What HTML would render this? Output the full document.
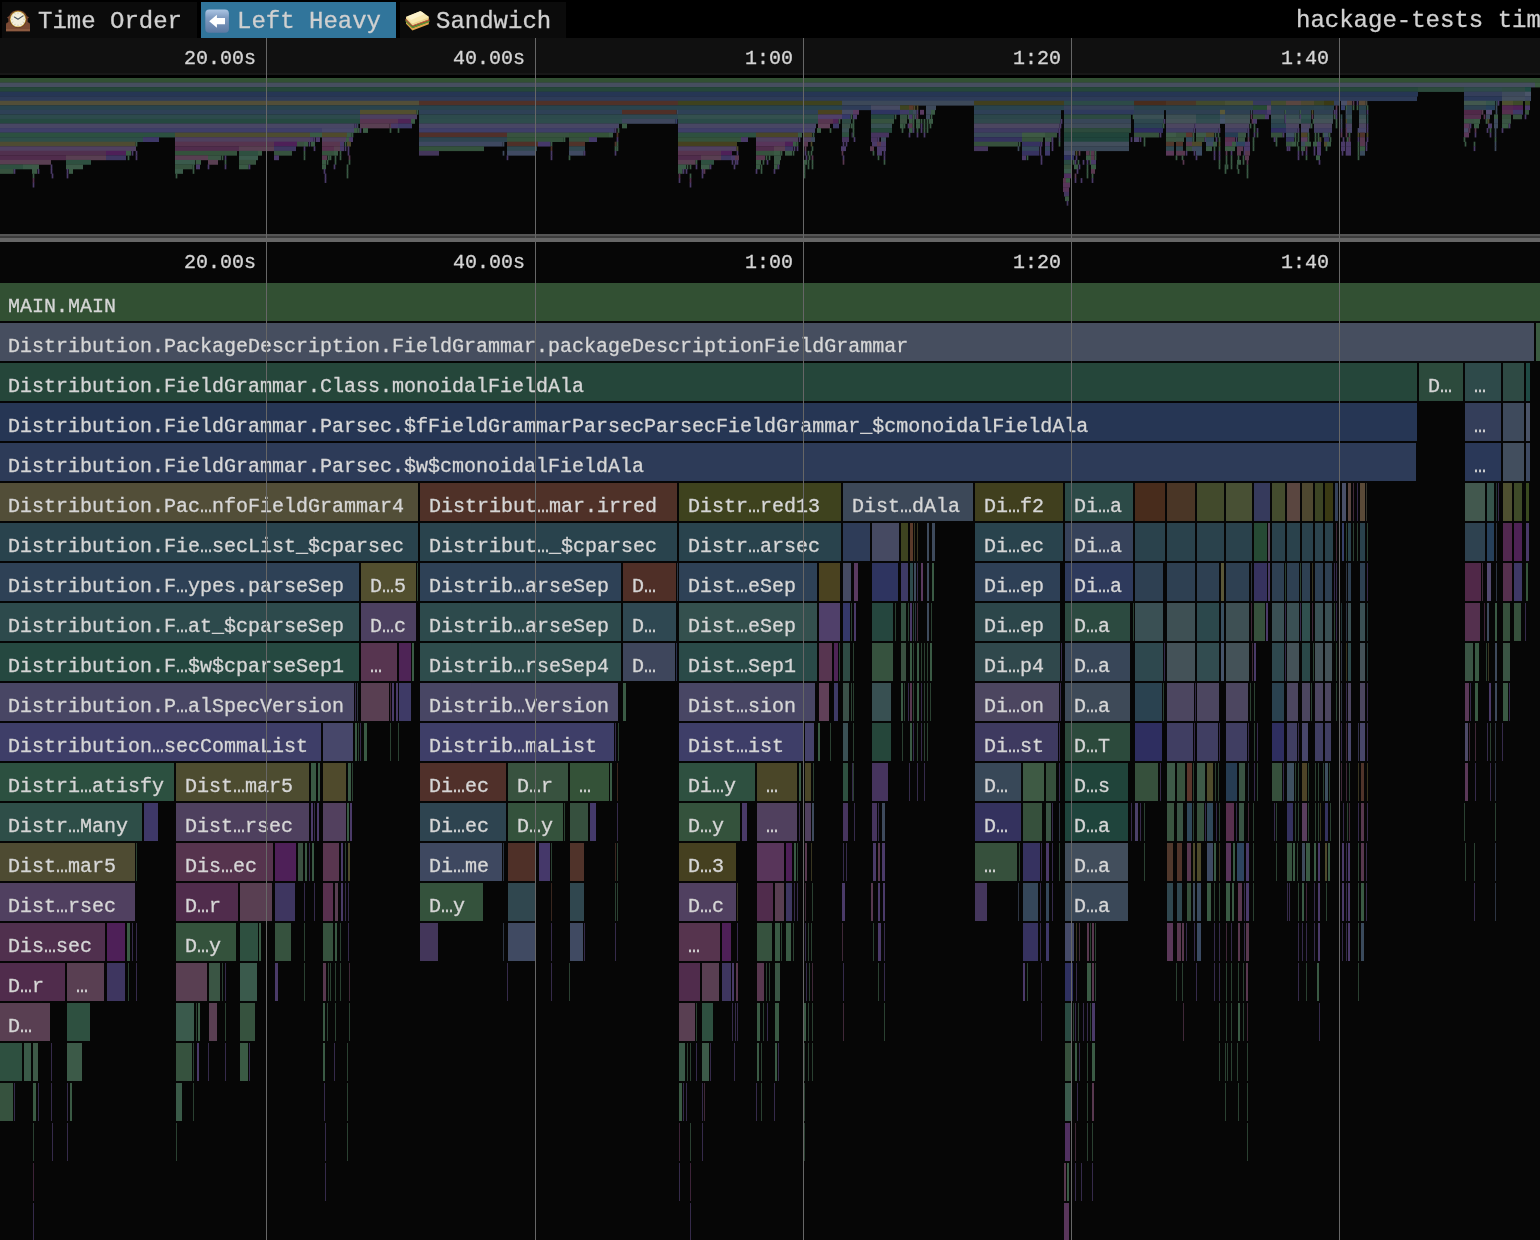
<!DOCTYPE html>
<html><head><meta charset="utf-8"><title>speedscope</title>
<style>
html,body{margin:0;padding:0;background:#060606;overflow:hidden}
body{width:1540px;height:1240px;position:relative;font-family:"Liberation Mono","DejaVu Sans Mono",monospace;color:#d4d4d4}
#tb{position:absolute;left:0;top:0;width:1540px;height:38px;background:#000}
.tab{position:absolute;top:2px;height:36px;background:#0b0b0b;font-size:24px;line-height:40px;white-space:pre;color:#d0d0d0;-webkit-text-stroke:.3px #d0d0d0}
.tab.on{background:#31759b}
.tab span.t{position:absolute;top:0}
#title{position:absolute;left:1296px;top:0;height:38px;line-height:41px;font-size:24px;white-space:pre;color:#d0d0d0;-webkit-text-stroke:.3px #d0d0d0}
#mmlab{position:absolute;left:0;top:38px;width:1540px;height:35px;background:#101010;border-bottom:2px solid #171717}
#mmgap{position:absolute;left:0;top:75px;width:1540px;height:3px;background:#000}
#sep{position:absolute;left:0;top:234px;width:1540px;height:8px;background:#666}
#sep i{position:absolute;left:0;top:2px;width:1540px;height:2px;background:#3c3c3c;display:block}
#sep b{position:absolute;left:0;top:0;width:1540px;height:2px;background:#555;display:block}
.tl{position:absolute;width:190px;text-align:right;font-size:20px;line-height:43px;height:38px;white-space:pre;color:#d4d4d4;-webkit-text-stroke:.3px #d4d4d4}
.gl{position:absolute;top:38px;width:1px;height:1202px;background:#666}
.l{position:absolute;font-size:20px;line-height:48px;height:38px;white-space:pre;overflow:hidden;color:#d6d6d6;-webkit-text-stroke:.3px #d6d6d6}
svg.big{position:absolute;left:0;top:0}
svg.ic{position:absolute}
#w{position:absolute;left:0;top:0;width:1540px;height:1240px;transform:translateZ(0);will-change:transform}
</style></head><body><div id="w">
<div id="tb">
<div class="tab" style="left:2px;width:195px"><svg class="ic" style="left:2px;top:6px" width="26" height="26" viewBox="4 8 26 26"><path d="M6 31.2V24.4Q6 22.8 7.6 22.5L8.4 22V18.4L7 17.8 8.2 16.6H9A9.6 9.6 0 0 1 27 16.6H27.8L29 17.8 27.6 18.4V22L28.4 22.5Q30 22.8 30 24.4V31.2Z" fill="#7b4a34"/><rect x="6" y="29" width="24" height="2.2" fill="#8c5a40"/><circle cx="18" cy="19.2" r="8.7" fill="#5e3623"/><circle cx="18" cy="19.2" r="8.1" fill="#c9a23a"/><circle cx="18" cy="19.2" r="7.4" fill="#f3eedc"/><g stroke="#b9b4a0" stroke-width=".7"><path d="M18 12.4v1.4M18 24.6v1.4M11.2 19.2h1.4M23.4 19.2h1.4M14.6 13.3l.7 1.2M21.4 13.3l-.7 1.2M14.6 25.1l.7-1.2M21.4 25.1l-.7-1.2M12.1 15.8l1.2.7M23.9 15.8l-1.2.7M12.1 22.6l1.2-.7M23.9 22.6l-1.2-.7"/></g><path d="M14.4 17L18 19.3 23 15.9" fill="none" stroke="#47525e" stroke-width="1.1" stroke-linecap="round" stroke-linejoin="round"/></svg><span class="t" style="left:36px">Time Order</span></div>
<div class="tab on" style="left:201px;width:195px"><svg class="ic" style="left:2px;top:6px" width="26" height="26" viewBox="203 8 26 26"><defs><linearGradient id="ag" x1="0" y1="0" x2="0" y2="1"><stop offset="0" stop-color="#adc6e4"/><stop offset=".35" stop-color="#809cc1"/><stop offset="1" stop-color="#5d7aa3"/></linearGradient></defs><rect x="205.3" y="9.5" width="23.6" height="23.2" rx="4" fill="url(#ag)"/><path d="M209.2 21.2L216.9 14.7V18H225V24.2H216.9V27.7Z" fill="#fff"/></svg><span class="t" style="left:36px">Left Heavy</span></div>
<div class="tab" style="left:400px;width:166px"><svg class="ic" style="left:3px;top:6px" width="28" height="26" viewBox="403 8 28 26"><path d="M406.0 21.4L412.4 28.0L428.8 21.8L428.8 24.2L412.4 30.4L406.0 23.8Z" fill="#e0a54c"/><path d="M405.4 19.8L412.4 26.4L429.4 20.2L429.4 22.0L412.4 28.2L405.4 21.6Z" fill="#5a9436"/><path d="M405.5 18.8L412.4 25.4L429.3 19.2L429.3 20.4L412.4 26.6L405.5 20.0Z" fill="#d8553a"/><path d="M406.0 16.2L412.4 22.8L428.8 16.6L428.8 19.4L412.4 25.6L406.0 19.0Z" fill="#efd48c"/><path d="M407.2 16.3L419.40000000000003 11.4Q420.6 10.8 421.8 11.7L428.2 16.3Q429.2 17.2 428.0 17.7L413.79999999999995 23.099999999999998Q412.4 23.7 411.2 22.799999999999997L406.4 17.8Q405.5 16.8 407.2 16.3Z" fill="#f8e8b0"/><path d="M407.6 16.400000000000002L419.40000000000003 11.6Q420.6 11.0 421.8 11.9L424.6 14.0L411.0 20.0Z" fill="#fcf2cc"/></svg><span class="t" style="left:36px">Sandwich</span></div>
<div id="title">hackage-tests time.eventlog</div>
</div>
<div id="mmlab"></div><div id="mmgap"></div>
<svg class="big" width="1540" height="1240" viewBox="0 0 1540 1240" shape-rendering="crispEdges">
<g id="mini" shape-rendering="auto"><rect x="0" y="78" width="1540" height="4.85" fill="#325033"/><rect x="0" y="82.55" width="1535" height="4.85" fill="#464e5f"/><rect x="1535" y="82.55" width="5" height="4.85" fill="#3a5a40"/><rect x="0" y="87.1" width="1418" height="4.85" fill="#25463a"/><rect x="1418" y="87.1" width="46" height="4.85" fill="#2c4a3c"/><rect x="1464" y="87.1" width="38" height="4.85" fill="#2e4a4a"/><rect x="1502" y="87.1" width="23" height="4.85" fill="#2e4a44"/><rect x="1525" y="87.1" width="6" height="4.85" fill="#1f4a44"/><rect x="0" y="91.65" width="1418" height="4.85" fill="#263654"/><rect x="1464" y="91.65" width="38" height="4.85" fill="#343e5a"/><rect x="1502" y="91.65" width="23" height="4.85" fill="#3e4a5c"/><rect x="1525" y="91.65" width="6" height="4.85" fill="#4a5468"/><rect x="0" y="96.2" width="1417" height="4.85" fill="#2d3b58"/><rect x="1464" y="96.2" width="38" height="4.85" fill="#2a3858"/><rect x="1502" y="96.2" width="23" height="4.85" fill="#424e5e"/><rect x="1525" y="96.2" width="6" height="4.85" fill="#3e4a62"/><rect x="0" y="100.75" width="419" height="4.85" fill="#524e38"/><rect x="419" y="100.75" width="259" height="4.85" fill="#4f3128"/><rect x="678" y="100.75" width="164" height="4.85" fill="#3e421e"/><rect x="842" y="100.75" width="132" height="4.85" fill="#3c4858"/><rect x="974" y="100.75" width="90" height="4.85" fill="#403f1e"/><rect x="1064" y="100.75" width="70" height="4.85" fill="#2c4a47"/><rect x="1134" y="100.75" width="32" height="4.85" fill="#482c1c"/><rect x="1166" y="100.75" width="30" height="4.85" fill="#4a3626"/><rect x="1196" y="100.75" width="29" height="4.85" fill="#424a2c"/><rect x="1225" y="100.75" width="28" height="4.85" fill="#485034"/><rect x="1253" y="100.75" width="18" height="4.85" fill="#363a5c"/><rect x="1271" y="100.75" width="15" height="4.85" fill="#444c2e"/><rect x="1286" y="100.75" width="15" height="4.85" fill="#5a4640"/><rect x="1301" y="100.75" width="13" height="4.85" fill="#4e4830"/><rect x="1314" y="100.75" width="10" height="4.85" fill="#3c4424"/><rect x="1324" y="100.75" width="10" height="4.85" fill="#3a3a14"/><rect x="1334" y="100.75" width="5" height="4.85" fill="#36425a"/><rect x="1341" y="100.75" width="6" height="4.85" fill="#4a5068"/><rect x="1347" y="100.75" width="5" height="4.85" fill="#5a4640"/><rect x="1352.65" y="100.75" width="1.7" height="4.85" fill="#58384f"/><rect x="1356.65" y="100.75" width="1.7" height="4.85" fill="#4a3a68"/><rect x="1359" y="100.75" width="6.65" height="4.85" fill="#5a4a38"/><rect x="1365.65" y="100.75" width="1.7" height="4.85" fill="#4a4a40"/><rect x="1464" y="100.75" width="22" height="4.85" fill="#42584e"/><rect x="1486" y="100.75" width="9" height="4.85" fill="#36544c"/><rect x="1495.65" y="100.75" width="2" height="4.85" fill="#2e4a4c"/><rect x="1497.65" y="100.75" width="1.7" height="4.85" fill="#4a3a68"/><rect x="1502" y="100.75" width="11" height="4.85" fill="#4e5030"/><rect x="1513" y="100.75" width="10" height="4.85" fill="#3e4a28"/><rect x="1525" y="100.75" width="5" height="4.85" fill="#3a4a20"/><rect x="0" y="105.3" width="419" height="4.85" fill="#29434d"/><rect x="419" y="105.3" width="259" height="4.85" fill="#29434d"/><rect x="678" y="105.3" width="164" height="4.85" fill="#29434d"/><rect x="842" y="105.3" width="29" height="4.85" fill="#2e3c58"/><rect x="871" y="105.3" width="29" height="4.85" fill="#464a62"/><rect x="900" y="105.3" width="9" height="4.85" fill="#3e4420"/><rect x="909" y="105.3" width="4.65" height="4.85" fill="#5a3a2a"/><rect x="913.65" y="105.3" width="1.7" height="4.85" fill="#4e4a2c"/><rect x="916.65" y="105.3" width="1.7" height="4.85" fill="#4e4a2c"/><rect x="926" y="105.3" width="5" height="4.85" fill="#3e4a5c"/><rect x="931" y="105.3" width="5" height="4.85" fill="#3e4a5c"/><rect x="974" y="105.3" width="90" height="4.85" fill="#29434d"/><rect x="1064" y="105.3" width="70" height="4.85" fill="#36425a"/><rect x="1134" y="105.3" width="32" height="4.85" fill="#2a424c"/><rect x="1166" y="105.3" width="30" height="4.85" fill="#2a424c"/><rect x="1196" y="105.3" width="29" height="4.85" fill="#2a424c"/><rect x="1225" y="105.3" width="28" height="4.85" fill="#2a424c"/><rect x="1253" y="105.3" width="14" height="4.85" fill="#264a34"/><rect x="1267" y="105.3" width="4" height="4.85" fill="#5a4a60"/><rect x="1271" y="105.3" width="15" height="4.85" fill="#2a424c"/><rect x="1286" y="105.3" width="15" height="4.85" fill="#2a424c"/><rect x="1301" y="105.3" width="13" height="4.85" fill="#2a424c"/><rect x="1314" y="105.3" width="10" height="4.85" fill="#2c444e"/><rect x="1324" y="105.3" width="10" height="4.85" fill="#2a424c"/><rect x="1335.65" y="105.3" width="1.7" height="4.85" fill="#58384f"/><rect x="1341" y="105.3" width="4" height="4.85" fill="#36406a"/><rect x="1345.65" y="105.3" width="1.35" height="4.85" fill="#3a5a44"/><rect x="1347" y="105.3" width="5" height="4.85" fill="#2a424c"/><rect x="1352.65" y="105.3" width="1.7" height="4.85" fill="#3a5a44"/><rect x="1356.65" y="105.3" width="1.7" height="4.85" fill="#3a5a44"/><rect x="1359" y="105.3" width="7" height="4.85" fill="#2a424c"/><rect x="1366.65" y="105.3" width="1.7" height="4.85" fill="#3a5a44"/><rect x="1464" y="105.3" width="22" height="4.85" fill="#2e4250"/><rect x="1486" y="105.3" width="9" height="4.85" fill="#26405a"/><rect x="1495.65" y="105.3" width="1.7" height="4.85" fill="#3e4a5c"/><rect x="1502" y="105.3" width="11" height="4.85" fill="#522850"/><rect x="1513" y="105.3" width="10" height="4.85" fill="#4e2256"/><rect x="1525" y="105.3" width="5" height="4.85" fill="#4a3a68"/><rect x="0" y="109.85" width="360" height="4.85" fill="#2e4156"/><rect x="360" y="109.85" width="56.65" height="4.85" fill="#524f2f"/><rect x="416.65" y="109.85" width="1.7" height="4.85" fill="#3a5a44"/><rect x="419" y="109.85" width="203" height="4.85" fill="#2e4156"/><rect x="622" y="109.85" width="54.65" height="4.85" fill="#4f2f27"/><rect x="676.65" y="109.85" width="1.35" height="4.85" fill="#3e4a5c"/><rect x="678" y="109.85" width="140" height="4.85" fill="#2e4156"/><rect x="818" y="109.85" width="24" height="4.85" fill="#4a4220"/><rect x="842" y="109.85" width="11" height="4.85" fill="#454a62"/><rect x="853" y="109.85" width="6" height="4.85" fill="#5a3a60"/><rect x="871" y="109.85" width="29" height="4.85" fill="#2e3460"/><rect x="900" y="109.85" width="9" height="4.85" fill="#3e3a66"/><rect x="909" y="109.85" width="4" height="4.85" fill="#2e4a4c"/><rect x="913" y="109.85" width="3.65" height="4.85" fill="#3e4a5c"/><rect x="916.65" y="109.85" width="1.7" height="4.85" fill="#4a3a68"/><rect x="920" y="109.85" width="4" height="4.85" fill="#5a3a60"/><rect x="926" y="109.85" width="5" height="4.85" fill="#3e4a5c"/><rect x="931" y="109.85" width="4" height="4.85" fill="#3a5a44"/><rect x="974" y="109.85" width="87" height="4.85" fill="#2e4056"/><rect x="1064" y="109.85" width="70" height="4.85" fill="#2e3a5c"/><rect x="1134" y="109.85" width="30" height="4.85" fill="#2e4052"/><rect x="1166" y="109.85" width="30" height="4.85" fill="#2e4052"/><rect x="1196" y="109.85" width="24" height="4.85" fill="#2e4052"/><rect x="1220" y="109.85" width="5" height="4.85" fill="#5a5838"/><rect x="1225" y="109.85" width="25" height="4.85" fill="#2e4052"/><rect x="1250.65" y="109.85" width="1.7" height="4.85" fill="#3e4a5c"/><rect x="1253" y="109.85" width="14" height="4.85" fill="#36325e"/><rect x="1267" y="109.85" width="4" height="4.85" fill="#4a3a68"/><rect x="1271" y="109.85" width="13.65" height="4.85" fill="#2e4052"/><rect x="1284.65" y="109.85" width="1.35" height="4.85" fill="#3a5a44"/><rect x="1286" y="109.85" width="13.65" height="4.85" fill="#2e4052"/><rect x="1299.65" y="109.85" width="1.35" height="4.85" fill="#3a5a44"/><rect x="1301" y="109.85" width="10" height="4.85" fill="#2e4052"/><rect x="1311.65" y="109.85" width="1.7" height="4.85" fill="#4e4a2c"/><rect x="1314" y="109.85" width="10" height="4.85" fill="#2e4052"/><rect x="1324" y="109.85" width="9" height="4.85" fill="#2e4052"/><rect x="1333.65" y="109.85" width="2" height="4.85" fill="#4a3a68"/><rect x="1335.65" y="109.85" width="1.7" height="4.85" fill="#4a3a68"/><rect x="1345.65" y="109.85" width="1.35" height="4.85" fill="#3e4a5c"/><rect x="1347" y="109.85" width="5" height="4.85" fill="#2e4052"/><rect x="1359" y="109.85" width="7" height="4.85" fill="#2e4052"/><rect x="1366.65" y="109.85" width="1.7" height="4.85" fill="#4a3a68"/><rect x="1464" y="109.85" width="17.65" height="4.85" fill="#502848"/><rect x="1481.65" y="109.85" width="1.7" height="4.85" fill="#593f52"/><rect x="1486" y="109.85" width="6" height="4.85" fill="#544a70"/><rect x="1495.65" y="109.85" width="1.7" height="4.85" fill="#3e4a5c"/><rect x="1502" y="109.85" width="11" height="4.85" fill="#56304e"/><rect x="1513" y="109.85" width="10" height="4.85" fill="#3e3866"/><rect x="1525" y="109.85" width="4" height="4.85" fill="#36543c"/><rect x="0" y="114.4" width="360" height="4.85" fill="#2d4a4c"/><rect x="360" y="114.4" width="57" height="4.85" fill="#4c4060"/><rect x="419" y="114.4" width="203" height="4.85" fill="#2d4a4c"/><rect x="622" y="114.4" width="56" height="4.85" fill="#2f4852"/><rect x="678" y="114.4" width="140" height="4.85" fill="#34504e"/><rect x="818" y="114.4" width="24" height="4.85" fill="#50406a"/><rect x="842" y="114.4" width="8.65" height="4.85" fill="#35386a"/><rect x="850.65" y="114.4" width="1.7" height="4.85" fill="#3a5a44"/><rect x="853" y="114.4" width="4" height="4.85" fill="#4a3a68"/><rect x="871" y="114.4" width="23" height="4.85" fill="#25463e"/><rect x="894.65" y="114.4" width="1.7" height="4.85" fill="#3a5a44"/><rect x="900" y="114.4" width="7" height="4.85" fill="#345040"/><rect x="907.65" y="114.4" width="1.35" height="4.85" fill="#3a5a44"/><rect x="909" y="114.4" width="3.65" height="4.85" fill="#4a3a68"/><rect x="912.65" y="114.4" width="2" height="4.85" fill="#3a5a44"/><rect x="914.65" y="114.4" width="2" height="4.85" fill="#3e4a5c"/><rect x="916.65" y="114.4" width="1.7" height="4.85" fill="#58384f"/><rect x="926" y="114.4" width="4" height="4.85" fill="#3e4a5c"/><rect x="930.65" y="114.4" width="1.7" height="4.85" fill="#3a5a44"/><rect x="974" y="114.4" width="87" height="4.85" fill="#2c464a"/><rect x="1064" y="114.4" width="67" height="4.85" fill="#2c4a40"/><rect x="1132.65" y="114.4" width="1.35" height="4.85" fill="#3a5a44"/><rect x="1134" y="114.4" width="30" height="4.85" fill="#3a5054"/><rect x="1166" y="114.4" width="30" height="4.85" fill="#3e5054"/><rect x="1196" y="114.4" width="24" height="4.85" fill="#2c484c"/><rect x="1220" y="114.4" width="5" height="4.85" fill="#3a5060"/><rect x="1225" y="114.4" width="25" height="4.85" fill="#3e5054"/><rect x="1250.65" y="114.4" width="1.7" height="4.85" fill="#58384f"/><rect x="1253" y="114.4" width="12" height="4.85" fill="#36503c"/><rect x="1265" y="114.4" width="4" height="4.85" fill="#4a3a68"/><rect x="1271" y="114.4" width="13.65" height="4.85" fill="#3a5054"/><rect x="1284.65" y="114.4" width="1.35" height="4.85" fill="#4a3a68"/><rect x="1286" y="114.4" width="13.65" height="4.85" fill="#3a5054"/><rect x="1299.65" y="114.4" width="1.35" height="4.85" fill="#4a3a68"/><rect x="1301" y="114.4" width="10" height="4.85" fill="#30504e"/><rect x="1311.65" y="114.4" width="1.7" height="4.85" fill="#58384f"/><rect x="1314" y="114.4" width="10" height="4.85" fill="#3a5054"/><rect x="1324" y="114.4" width="9" height="4.85" fill="#3a5054"/><rect x="1333.65" y="114.4" width="2" height="4.85" fill="#3a5a44"/><rect x="1335.65" y="114.4" width="1.7" height="4.85" fill="#4a3a68"/><rect x="1340.65" y="114.4" width="1.7" height="4.85" fill="#2e4a4c"/><rect x="1345.65" y="114.4" width="1.35" height="4.85" fill="#3e4a5c"/><rect x="1347" y="114.4" width="5" height="4.85" fill="#3a5054"/><rect x="1359" y="114.4" width="7" height="4.85" fill="#3a5054"/><rect x="1366.65" y="114.4" width="1.7" height="4.85" fill="#2e4a4c"/><rect x="1464" y="114.4" width="17" height="4.85" fill="#54304e"/><rect x="1483.65" y="114.4" width="1.7" height="4.85" fill="#56304e"/><rect x="1486" y="114.4" width="4" height="4.85" fill="#3e4a5c"/><rect x="1494" y="114.4" width="4" height="4.85" fill="#3a5a44"/><rect x="1502" y="114.4" width="9" height="4.85" fill="#36503c"/><rect x="1513" y="114.4" width="9" height="4.85" fill="#36503c"/><rect x="1524.65" y="114.4" width="1.7" height="4.85" fill="#4a3a68"/><rect x="0" y="118.95" width="360" height="4.85" fill="#254840"/><rect x="360" y="118.95" width="38" height="4.85" fill="#573550"/><rect x="398" y="118.95" width="13" height="4.85" fill="#4e2456"/><rect x="411" y="118.95" width="4" height="4.85" fill="#3a5a44"/><rect x="419" y="118.95" width="203" height="4.85" fill="#2e4c4c"/><rect x="622" y="118.95" width="53.65" height="4.85" fill="#3e465c"/><rect x="675.65" y="118.95" width="1.7" height="4.85" fill="#36406a"/><rect x="678" y="118.95" width="140" height="4.85" fill="#2a4a48"/><rect x="818" y="118.95" width="15" height="4.85" fill="#573550"/><rect x="833" y="118.95" width="5.65" height="4.85" fill="#4e2456"/><rect x="838.65" y="118.95" width="1.7" height="4.85" fill="#3a5a44"/><rect x="842" y="118.95" width="9" height="4.85" fill="#2e4a44"/><rect x="852.65" y="118.95" width="1.7" height="4.85" fill="#3a5a44"/><rect x="871" y="118.95" width="23" height="4.85" fill="#36523e"/><rect x="900" y="118.95" width="7" height="4.85" fill="#3a5040"/><rect x="909" y="118.95" width="3.65" height="4.85" fill="#3a5a44"/><rect x="912.65" y="118.95" width="1.7" height="4.85" fill="#3a5a44"/><rect x="916" y="118.95" width="4" height="4.85" fill="#3a5a44"/><rect x="920.65" y="118.95" width="1.7" height="4.85" fill="#3a5a44"/><rect x="923.65" y="118.95" width="1.7" height="4.85" fill="#3a5a44"/><rect x="926.65" y="118.95" width="1.7" height="4.85" fill="#3a5a44"/><rect x="929" y="118.95" width="4" height="4.85" fill="#3a5a44"/><rect x="974" y="118.95" width="86.65" height="4.85" fill="#30484c"/><rect x="1060.65" y="118.95" width="1.7" height="4.85" fill="#4a3a68"/><rect x="1064" y="118.95" width="67" height="4.85" fill="#384658"/><rect x="1134" y="118.95" width="29.65" height="4.85" fill="#2e484e"/><rect x="1163.65" y="118.95" width="1.7" height="4.85" fill="#4a3a68"/><rect x="1166" y="118.95" width="30" height="4.85" fill="#445258"/><rect x="1196" y="118.95" width="24" height="4.85" fill="#324c50"/><rect x="1220" y="118.95" width="5" height="4.85" fill="#46546a"/><rect x="1225" y="118.95" width="25" height="4.85" fill="#445258"/><rect x="1251.65" y="118.95" width="1.35" height="4.85" fill="#58384f"/><rect x="1253" y="118.95" width="4" height="4.85" fill="#4a3a68"/><rect x="1271" y="118.95" width="13.65" height="4.85" fill="#2e484e"/><rect x="1284.65" y="118.95" width="1.35" height="4.85" fill="#4a3a68"/><rect x="1286" y="118.95" width="15" height="4.85" fill="#445258"/><rect x="1301" y="118.95" width="10" height="4.85" fill="#2a4848"/><rect x="1312.65" y="118.95" width="1.35" height="4.85" fill="#3a5a44"/><rect x="1314" y="118.95" width="10" height="4.85" fill="#445258"/><rect x="1324" y="118.95" width="9" height="4.85" fill="#445258"/><rect x="1335.65" y="118.95" width="1.7" height="4.85" fill="#3a5a44"/><rect x="1340.65" y="118.95" width="1.7" height="4.85" fill="#3e4a5c"/><rect x="1345.65" y="118.95" width="1.35" height="4.85" fill="#4e4a2c"/><rect x="1347" y="118.95" width="5" height="4.85" fill="#2e4a4c"/><rect x="1359" y="118.95" width="7" height="4.85" fill="#445258"/><rect x="1366.65" y="118.95" width="1.7" height="4.85" fill="#2e4a4c"/><rect x="1464" y="118.95" width="10" height="4.85" fill="#3a5444"/><rect x="1474" y="118.95" width="6" height="4.85" fill="#3a5a44"/><rect x="1485.65" y="118.95" width="2" height="4.85" fill="#3a5a44"/><rect x="1487.65" y="118.95" width="1.7" height="4.85" fill="#4e4a2c"/><rect x="1494" y="118.95" width="4" height="4.85" fill="#3e4a5c"/><rect x="1502" y="118.95" width="9" height="4.85" fill="#3a5444"/><rect x="0" y="123.5" width="354.65" height="4.85" fill="#484664"/><rect x="354.65" y="123.5" width="2" height="4.85" fill="#4a3a68"/><rect x="356.65" y="123.5" width="1.7" height="4.85" fill="#3e4a5c"/><rect x="360" y="123.5" width="29.65" height="4.85" fill="#593f52"/><rect x="389.65" y="123.5" width="1.35" height="4.85" fill="#58384f"/><rect x="391" y="123.5" width="4" height="4.85" fill="#4a3a68"/><rect x="395" y="123.5" width="3" height="4.85" fill="#4a3a68"/><rect x="398" y="123.5" width="14" height="4.85" fill="#3e3a66"/><rect x="419" y="123.5" width="200" height="4.85" fill="#484664"/><rect x="622" y="123.5" width="5" height="4.85" fill="#3a5a44"/><rect x="678" y="123.5" width="138" height="4.85" fill="#484664"/><rect x="818" y="123.5" width="12" height="4.85" fill="#604058"/><rect x="833" y="123.5" width="6" height="4.85" fill="#3e3a66"/><rect x="842" y="123.5" width="8" height="4.85" fill="#3a5048"/><rect x="850.65" y="123.5" width="2" height="4.85" fill="#3a5a44"/><rect x="852.65" y="123.5" width="1.7" height="4.85" fill="#3a5a44"/><rect x="871" y="123.5" width="21" height="4.85" fill="#385052"/><rect x="900" y="123.5" width="3.65" height="4.85" fill="#3a5a44"/><rect x="903.65" y="123.5" width="1.7" height="4.85" fill="#3a5a44"/><rect x="907.65" y="123.5" width="1.35" height="4.85" fill="#4a3a68"/><rect x="909" y="123.5" width="3.65" height="4.85" fill="#58384f"/><rect x="912.65" y="123.5" width="1.7" height="4.85" fill="#3a5a44"/><rect x="916" y="123.5" width="4" height="4.85" fill="#3a5a44"/><rect x="920.65" y="123.5" width="1.7" height="4.85" fill="#4a3a68"/><rect x="923.65" y="123.5" width="1.7" height="4.85" fill="#3a5a44"/><rect x="926.65" y="123.5" width="1.7" height="4.85" fill="#3a5a44"/><rect x="929.65" y="123.5" width="1.7" height="4.85" fill="#3a5a44"/><rect x="974" y="123.5" width="85.65" height="4.85" fill="#4c4660"/><rect x="1059.65" y="123.5" width="1.7" height="4.85" fill="#4a3a68"/><rect x="1064" y="123.5" width="67" height="4.85" fill="#3e4a58"/><rect x="1134" y="123.5" width="28.65" height="4.85" fill="#2a4250"/><rect x="1162.65" y="123.5" width="1.7" height="4.85" fill="#3a5a44"/><rect x="1166" y="123.5" width="28.65" height="4.85" fill="#4c4660"/><rect x="1194.65" y="123.5" width="1.35" height="4.85" fill="#4a3a68"/><rect x="1196" y="123.5" width="24" height="4.85" fill="#4c4660"/><rect x="1225" y="123.5" width="24" height="4.85" fill="#4c4660"/><rect x="1249.65" y="123.5" width="1.7" height="4.85" fill="#3a5a44"/><rect x="1253.65" y="123.5" width="1.7" height="4.85" fill="#3a5a44"/><rect x="1271" y="123.5" width="15" height="4.85" fill="#2a4250"/><rect x="1286" y="123.5" width="13" height="4.85" fill="#4c4660"/><rect x="1301" y="123.5" width="9.65" height="4.85" fill="#4c4660"/><rect x="1310.65" y="123.5" width="1.7" height="4.85" fill="#3a5a44"/><rect x="1314" y="123.5" width="10" height="4.85" fill="#4c4660"/><rect x="1324" y="123.5" width="8" height="4.85" fill="#4c4660"/><rect x="1335.65" y="123.5" width="1.7" height="4.85" fill="#3a5a44"/><rect x="1340.65" y="123.5" width="1.7" height="4.85" fill="#3e4a5c"/><rect x="1345.65" y="123.5" width="1.35" height="4.85" fill="#4a3a68"/><rect x="1347" y="123.5" width="5" height="4.85" fill="#4c4660"/><rect x="1359" y="123.5" width="7" height="4.85" fill="#4c4660"/><rect x="1366.65" y="123.5" width="1.7" height="4.85" fill="#4a3a68"/><rect x="1464" y="123.5" width="5.65" height="4.85" fill="#5a3858"/><rect x="1469.65" y="123.5" width="1.7" height="4.85" fill="#4a3a68"/><rect x="1474" y="123.5" width="5" height="4.85" fill="#3a5a44"/><rect x="1488" y="123.5" width="4" height="4.85" fill="#4a3a68"/><rect x="1494" y="123.5" width="4" height="4.85" fill="#3e4a5c"/><rect x="1502" y="123.5" width="6.65" height="4.85" fill="#3a5a44"/><rect x="1508.65" y="123.5" width="1.7" height="4.85" fill="#4a3a68"/><rect x="0" y="128.05" width="322" height="4.85" fill="#3e3e68"/><rect x="322" y="128.05" width="32" height="4.85" fill="#47476a"/><rect x="354" y="128.05" width="3.65" height="4.85" fill="#3a5a44"/><rect x="357.65" y="128.05" width="2" height="4.85" fill="#3a5a44"/><rect x="359.65" y="128.05" width="1.7" height="4.85" fill="#4a3a68"/><rect x="363" y="128.05" width="5" height="4.85" fill="#3a5a44"/><rect x="389.65" y="128.05" width="1.7" height="4.85" fill="#3a5a44"/><rect x="397.65" y="128.05" width="1.7" height="4.85" fill="#3a5a44"/><rect x="419" y="128.05" width="195.65" height="4.85" fill="#3e3e68"/><rect x="614.65" y="128.05" width="1.7" height="4.85" fill="#4a3a68"/><rect x="617.65" y="128.05" width="1.7" height="4.85" fill="#3a5a44"/><rect x="678" y="128.05" width="126" height="4.85" fill="#3e3e68"/><rect x="804" y="128.05" width="11" height="4.85" fill="#45426a"/><rect x="817" y="128.05" width="4" height="4.85" fill="#3a5a44"/><rect x="829.65" y="128.05" width="1.7" height="4.85" fill="#3a5a44"/><rect x="842" y="128.05" width="7" height="4.85" fill="#3a5054"/><rect x="852.65" y="128.05" width="1.7" height="4.85" fill="#3a5a44"/><rect x="871" y="128.05" width="21" height="4.85" fill="#25463a"/><rect x="901.65" y="128.05" width="1.7" height="4.85" fill="#3a5a44"/><rect x="909" y="128.05" width="3.65" height="4.85" fill="#3a5a44"/><rect x="912.65" y="128.05" width="1.7" height="4.85" fill="#4a3a68"/><rect x="916.65" y="128.05" width="1.7" height="4.85" fill="#3a5a44"/><rect x="920.65" y="128.05" width="1.7" height="4.85" fill="#4a3a68"/><rect x="923.65" y="128.05" width="1.7" height="4.85" fill="#3a5a44"/><rect x="926.65" y="128.05" width="1.7" height="4.85" fill="#3a5a44"/><rect x="974" y="128.05" width="84.65" height="4.85" fill="#3e3a60"/><rect x="1058.65" y="128.05" width="1.7" height="4.85" fill="#4a3a68"/><rect x="1064" y="128.05" width="67" height="4.85" fill="#2c4a3c"/><rect x="1134" y="128.05" width="29" height="4.85" fill="#2e2e60"/><rect x="1166" y="128.05" width="27.65" height="4.85" fill="#403e62"/><rect x="1193.65" y="128.05" width="1.7" height="4.85" fill="#4a3a68"/><rect x="1196" y="128.05" width="22.65" height="4.85" fill="#403e62"/><rect x="1218.65" y="128.05" width="1.7" height="4.85" fill="#4a3a68"/><rect x="1225" y="128.05" width="22.65" height="4.85" fill="#403e62"/><rect x="1247.65" y="128.05" width="1.7" height="4.85" fill="#4a3a68"/><rect x="1253.65" y="128.05" width="1.7" height="4.85" fill="#3a5a44"/><rect x="1256.65" y="128.05" width="1.7" height="4.85" fill="#4a3a68"/><rect x="1271" y="128.05" width="15" height="4.85" fill="#2e2e60"/><rect x="1286" y="128.05" width="11.65" height="4.85" fill="#403e62"/><rect x="1297.65" y="128.05" width="1.7" height="4.85" fill="#4a3a68"/><rect x="1301" y="128.05" width="8" height="4.85" fill="#48466a"/><rect x="1314" y="128.05" width="10" height="4.85" fill="#403e62"/><rect x="1324" y="128.05" width="8" height="4.85" fill="#403e62"/><rect x="1340.65" y="128.05" width="1.7" height="4.85" fill="#4a3a68"/><rect x="1345.65" y="128.05" width="1.35" height="4.85" fill="#58384f"/><rect x="1347" y="128.05" width="5" height="4.85" fill="#48466a"/><rect x="1357.65" y="128.05" width="1.35" height="4.85" fill="#48466a"/><rect x="1359" y="128.05" width="7" height="4.85" fill="#48466a"/><rect x="1366.65" y="128.05" width="1.7" height="4.85" fill="#4a3a68"/><rect x="1464" y="128.05" width="4.65" height="4.85" fill="#4e4a68"/><rect x="1468.65" y="128.05" width="1.7" height="4.85" fill="#58384f"/><rect x="1474.65" y="128.05" width="1.7" height="4.85" fill="#58384f"/><rect x="1486.65" y="128.05" width="1.7" height="4.85" fill="#4a3a68"/><rect x="1489.65" y="128.05" width="1.7" height="4.85" fill="#3a5a44"/><rect x="1494.65" y="128.05" width="1.7" height="4.85" fill="#3e4a5c"/><rect x="1501.65" y="128.05" width="1.7" height="4.85" fill="#4a3a68"/><rect x="0" y="132.6" width="175" height="4.85" fill="#2c5040"/><rect x="175" y="132.6" width="135" height="4.85" fill="#4d4c30"/><rect x="310" y="132.6" width="7" height="4.85" fill="#3a5a44"/><rect x="317" y="132.6" width="5" height="4.85" fill="#3a5a44"/><rect x="322" y="132.6" width="25" height="4.85" fill="#4f4a2c"/><rect x="347" y="132.6" width="4.65" height="4.85" fill="#3a5a44"/><rect x="351.65" y="132.6" width="1.7" height="4.85" fill="#3a5a44"/><rect x="419" y="132.6" width="88" height="4.85" fill="#50302a"/><rect x="507" y="132.6" width="62" height="4.85" fill="#38523f"/><rect x="569" y="132.6" width="40" height="4.85" fill="#345238"/><rect x="609" y="132.6" width="4" height="4.85" fill="#3a5a44"/><rect x="616.65" y="132.6" width="1.7" height="4.85" fill="#50342a"/><rect x="678" y="132.6" width="78" height="4.85" fill="#2e5040"/><rect x="756" y="132.6" width="42" height="4.85" fill="#4a4628"/><rect x="798" y="132.6" width="4" height="4.85" fill="#3a5a44"/><rect x="804" y="132.6" width="8" height="4.85" fill="#4a4628"/><rect x="812.65" y="132.6" width="1.7" height="4.85" fill="#3a5a44"/><rect x="842" y="132.6" width="7" height="4.85" fill="#2e5040"/><rect x="851.65" y="132.6" width="1" height="4.85" fill="#4a3a68"/><rect x="852.65" y="132.6" width="1.7" height="4.85" fill="#3a5a44"/><rect x="871" y="132.6" width="18" height="4.85" fill="#46345e"/><rect x="908.65" y="132.6" width="1.7" height="4.85" fill="#4a3a68"/><rect x="916.65" y="132.6" width="1.7" height="4.85" fill="#4a3a68"/><rect x="923.65" y="132.6" width="1.7" height="4.85" fill="#4a3a68"/><rect x="974" y="132.6" width="48" height="4.85" fill="#384858"/><rect x="1022" y="132.6" width="23" height="4.85" fill="#3e5a44"/><rect x="1045" y="132.6" width="12" height="4.85" fill="#36503c"/><rect x="1058.65" y="132.6" width="1.7" height="4.85" fill="#4a3a68"/><rect x="1064" y="132.6" width="65" height="4.85" fill="#20443a"/><rect x="1134" y="132.6" width="25" height="4.85" fill="#36503c"/><rect x="1159.65" y="132.6" width="1.7" height="4.85" fill="#4a3a68"/><rect x="1166" y="132.6" width="10" height="4.85" fill="#3e5a48"/><rect x="1176" y="132.6" width="10" height="4.85" fill="#38523e"/><rect x="1186" y="132.6" width="6.65" height="4.85" fill="#5a362c"/><rect x="1192.65" y="132.6" width="1.7" height="4.85" fill="#3a5a44"/><rect x="1196" y="132.6" width="10" height="4.85" fill="#3e5a48"/><rect x="1206" y="132.6" width="8" height="4.85" fill="#4e4c2c"/><rect x="1214.65" y="132.6" width="1.7" height="4.85" fill="#3a5a44"/><rect x="1217.65" y="132.6" width="1.7" height="4.85" fill="#3a5a44"/><rect x="1225" y="132.6" width="13" height="4.85" fill="#263c52"/><rect x="1238" y="132.6" width="8" height="4.85" fill="#3a5444"/><rect x="1247.65" y="132.6" width="1.7" height="4.85" fill="#3e4a5c"/><rect x="1253.65" y="132.6" width="1.7" height="4.85" fill="#4a3a68"/><rect x="1256.65" y="132.6" width="1.7" height="4.85" fill="#3a5a44"/><rect x="1271" y="132.6" width="11.65" height="4.85" fill="#36503c"/><rect x="1282.65" y="132.6" width="1.7" height="4.85" fill="#4a3a68"/><rect x="1286" y="132.6" width="8.65" height="4.85" fill="#3e5060"/><rect x="1294.65" y="132.6" width="1.7" height="4.85" fill="#3a5a44"/><rect x="1297.65" y="132.6" width="1.7" height="4.85" fill="#3a5a44"/><rect x="1301" y="132.6" width="6.65" height="4.85" fill="#4e4428"/><rect x="1307.65" y="132.6" width="1.7" height="4.85" fill="#3a5a44"/><rect x="1314.65" y="132.6" width="1.7" height="4.85" fill="#3a5a44"/><rect x="1317.65" y="132.6" width="1.7" height="4.85" fill="#3a5a44"/><rect x="1322.65" y="132.6" width="1.35" height="4.85" fill="#3a5a44"/><rect x="1324" y="132.6" width="4.65" height="4.85" fill="#3e5060"/><rect x="1328.65" y="132.6" width="1.7" height="4.85" fill="#3a5a44"/><rect x="1340.65" y="132.6" width="1.7" height="4.85" fill="#58384f"/><rect x="1345.65" y="132.6" width="1.7" height="4.85" fill="#58384f"/><rect x="1348.65" y="132.6" width="1.7" height="4.85" fill="#3a5a44"/><rect x="1357.65" y="132.6" width="1.7" height="4.85" fill="#4e4a2c"/><rect x="1360" y="132.6" width="5" height="4.85" fill="#50342a"/><rect x="1366.65" y="132.6" width="1.7" height="4.85" fill="#4e4a2c"/><rect x="1464" y="132.6" width="5" height="4.85" fill="#5a3858"/><rect x="1474.65" y="132.6" width="1.7" height="4.85" fill="#4a3a68"/><rect x="1489.65" y="132.6" width="1.7" height="4.85" fill="#4a3a68"/><rect x="1494.65" y="132.6" width="1.7" height="4.85" fill="#3e4a5c"/><rect x="0" y="137.15" width="143" height="4.85" fill="#2e4e48"/><rect x="143" y="137.15" width="16" height="4.85" fill="#3e3868"/><rect x="175" y="137.15" width="135" height="4.85" fill="#4e405e"/><rect x="310" y="137.15" width="3.65" height="4.85" fill="#4a3a68"/><rect x="313.65" y="137.15" width="1.7" height="4.85" fill="#4a3a68"/><rect x="316" y="137.15" width="4" height="4.85" fill="#4a3a68"/><rect x="322" y="137.15" width="24" height="4.85" fill="#52405e"/><rect x="346" y="137.15" width="3" height="4.85" fill="#3a5a44"/><rect x="349" y="137.15" width="4" height="4.85" fill="#4a3a68"/><rect x="419" y="137.15" width="88" height="4.85" fill="#2e4450"/><rect x="507" y="137.15" width="56.65" height="4.85" fill="#34523c"/><rect x="563.65" y="137.15" width="1.7" height="4.85" fill="#3a5a44"/><rect x="569" y="137.15" width="20" height="4.85" fill="#36503e"/><rect x="589" y="137.15" width="8" height="4.85" fill="#443a6a"/><rect x="616.65" y="137.15" width="1.7" height="4.85" fill="#4a3a68"/><rect x="678" y="137.15" width="63" height="4.85" fill="#34523c"/><rect x="741" y="137.15" width="7" height="4.85" fill="#4a3a68"/><rect x="756" y="137.15" width="42" height="4.85" fill="#50405e"/><rect x="798.65" y="137.15" width="1.7" height="4.85" fill="#4a3a68"/><rect x="804" y="137.15" width="7" height="4.85" fill="#50405e"/><rect x="811" y="137.15" width="4" height="4.85" fill="#3e4a5c"/><rect x="842" y="137.15" width="7" height="4.85" fill="#46345e"/><rect x="853.65" y="137.15" width="1.7" height="4.85" fill="#4a3a68"/><rect x="871" y="137.15" width="6.65" height="4.85" fill="#46345e"/><rect x="877.65" y="137.15" width="1.7" height="4.85" fill="#4a3a68"/><rect x="881" y="137.15" width="5" height="4.85" fill="#3e4a5c"/><rect x="974" y="137.15" width="48" height="4.85" fill="#34325e"/><rect x="1022" y="137.15" width="21" height="4.85" fill="#36503c"/><rect x="1045" y="137.15" width="6.65" height="4.85" fill="#3a5444"/><rect x="1051.65" y="137.15" width="1.7" height="4.85" fill="#4a3a68"/><rect x="1058.65" y="137.15" width="1.7" height="4.85" fill="#3e4a5c"/><rect x="1064" y="137.15" width="65" height="4.85" fill="#1f443c"/><rect x="1130.65" y="137.15" width="1.7" height="4.85" fill="#4a3a68"/><rect x="1134" y="137.15" width="5" height="4.85" fill="#4a4068"/><rect x="1139.65" y="137.15" width="1.7" height="4.85" fill="#4a3a68"/><rect x="1143.65" y="137.15" width="1.7" height="4.85" fill="#3a5a44"/><rect x="1166" y="137.15" width="10" height="4.85" fill="#3a5440"/><rect x="1176" y="137.15" width="8" height="4.85" fill="#3a5444"/><rect x="1186" y="137.15" width="6.65" height="4.85" fill="#30485a"/><rect x="1192.65" y="137.15" width="1.7" height="4.85" fill="#3a5a44"/><rect x="1196" y="137.15" width="8.65" height="4.85" fill="#36503c"/><rect x="1204.65" y="137.15" width="1.35" height="4.85" fill="#4a3a68"/><rect x="1206" y="137.15" width="8" height="4.85" fill="#30485a"/><rect x="1215.65" y="137.15" width="1.7" height="4.85" fill="#4a3a68"/><rect x="1218.65" y="137.15" width="1.7" height="4.85" fill="#3a5a44"/><rect x="1225" y="137.15" width="10" height="4.85" fill="#58304e"/><rect x="1235.65" y="137.15" width="1.7" height="4.85" fill="#4a3a68"/><rect x="1238" y="137.15" width="7" height="4.85" fill="#3a5444"/><rect x="1247.65" y="137.15" width="1.7" height="4.85" fill="#58384f"/><rect x="1252.65" y="137.15" width="1.7" height="4.85" fill="#3a5a44"/><rect x="1273.65" y="137.15" width="2" height="4.85" fill="#4a3a68"/><rect x="1275.65" y="137.15" width="1.7" height="4.85" fill="#3a5a44"/><rect x="1286" y="137.15" width="8" height="4.85" fill="#34325e"/><rect x="1294.65" y="137.15" width="1.7" height="4.85" fill="#3a5a44"/><rect x="1297.65" y="137.15" width="1.7" height="4.85" fill="#3a5a44"/><rect x="1301" y="137.15" width="6.65" height="4.85" fill="#5a3e5e"/><rect x="1307.65" y="137.15" width="1.7" height="4.85" fill="#3a5a44"/><rect x="1314.65" y="137.15" width="1.7" height="4.85" fill="#3a5a44"/><rect x="1317.65" y="137.15" width="2" height="4.85" fill="#3a5a44"/><rect x="1319.65" y="137.15" width="1.7" height="4.85" fill="#4e4a2c"/><rect x="1324" y="137.15" width="5" height="4.85" fill="#34325e"/><rect x="1329.65" y="137.15" width="1.7" height="4.85" fill="#3a5a44"/><rect x="1342.65" y="137.15" width="1.7" height="4.85" fill="#4a3a68"/><rect x="1346.65" y="137.15" width="2" height="4.85" fill="#3a5a44"/><rect x="1348.65" y="137.15" width="1.7" height="4.85" fill="#58384f"/><rect x="1357.65" y="137.15" width="1.7" height="4.85" fill="#4a3a68"/><rect x="1360" y="137.15" width="5" height="4.85" fill="#58384f"/><rect x="1366.65" y="137.15" width="1.7" height="4.85" fill="#4a3a68"/><rect x="1463.65" y="137.15" width="1.7" height="4.85" fill="#3a5a44"/><rect x="1494.65" y="137.15" width="1.7" height="4.85" fill="#3a5a44"/><rect x="0" y="141.7" width="135.65" height="4.85" fill="#4e4b32"/><rect x="135.65" y="141.7" width="1.7" height="4.85" fill="#3a5a44"/><rect x="175" y="141.7" width="99" height="4.85" fill="#56344e"/><rect x="274" y="141.7" width="23" height="4.85" fill="#4e2058"/><rect x="297" y="141.7" width="7" height="4.85" fill="#3a5040"/><rect x="304" y="141.7" width="4" height="4.85" fill="#3a5a44"/><rect x="308.65" y="141.7" width="1.7" height="4.85" fill="#4a3a68"/><rect x="311" y="141.7" width="4" height="4.85" fill="#3a5a44"/><rect x="322" y="141.7" width="18" height="4.85" fill="#59364f"/><rect x="340" y="141.7" width="4" height="4.85" fill="#4a3a68"/><rect x="344.65" y="141.7" width="1.7" height="4.85" fill="#3a5a44"/><rect x="347" y="141.7" width="4" height="4.85" fill="#4e4a2c"/><rect x="419" y="141.7" width="83.65" height="4.85" fill="#3e4860"/><rect x="502.65" y="141.7" width="1.7" height="4.85" fill="#3e4a5c"/><rect x="507" y="141.7" width="31" height="4.85" fill="#4f3028"/><rect x="538" y="141.7" width="12.65" height="4.85" fill="#45386a"/><rect x="550.65" y="141.7" width="1.7" height="4.85" fill="#3a5a44"/><rect x="569" y="141.7" width="16" height="4.85" fill="#50332a"/><rect x="614.65" y="141.7" width="2" height="4.85" fill="#50342a"/><rect x="616.65" y="141.7" width="1.7" height="4.85" fill="#3a5a44"/><rect x="678" y="141.7" width="59" height="4.85" fill="#454020"/><rect x="756" y="141.7" width="29" height="4.85" fill="#58355a"/><rect x="785" y="141.7" width="8" height="4.85" fill="#4e2058"/><rect x="793" y="141.7" width="3.65" height="4.85" fill="#3a5a44"/><rect x="796.65" y="141.7" width="1.7" height="4.85" fill="#3a5a44"/><rect x="804" y="141.7" width="4" height="4.85" fill="#58384f"/><rect x="810.65" y="141.7" width="1.7" height="4.85" fill="#4e4a2c"/><rect x="842.65" y="141.7" width="1.7" height="4.85" fill="#4a3a68"/><rect x="845.65" y="141.7" width="1.7" height="4.85" fill="#4a3a68"/><rect x="872" y="141.7" width="5" height="4.85" fill="#4a3a68"/><rect x="877" y="141.7" width="4" height="4.85" fill="#58384f"/><rect x="881" y="141.7" width="5" height="4.85" fill="#4a3a68"/><rect x="974" y="141.7" width="44" height="4.85" fill="#36503c"/><rect x="1018.65" y="141.7" width="1.7" height="4.85" fill="#3a5a44"/><rect x="1022" y="141.7" width="18.65" height="4.85" fill="#363260"/><rect x="1040.65" y="141.7" width="1.7" height="4.85" fill="#4a3a68"/><rect x="1045" y="141.7" width="5" height="4.85" fill="#4a3a68"/><rect x="1051.65" y="141.7" width="1.7" height="4.85" fill="#4a3a68"/><rect x="1058.65" y="141.7" width="1.7" height="4.85" fill="#3a5a44"/><rect x="1064" y="141.7" width="65" height="4.85" fill="#424e5c"/><rect x="1143.65" y="141.7" width="1.7" height="4.85" fill="#3a5a44"/><rect x="1166" y="141.7" width="8" height="4.85" fill="#50382c"/><rect x="1176" y="141.7" width="7" height="4.85" fill="#50342a"/><rect x="1186" y="141.7" width="6" height="4.85" fill="#58384f"/><rect x="1192" y="141.7" width="4" height="4.85" fill="#4e4a2c"/><rect x="1196" y="141.7" width="6" height="4.85" fill="#4e4a2c"/><rect x="1206" y="141.7" width="7" height="4.85" fill="#3e4a62"/><rect x="1213" y="141.7" width="4" height="4.85" fill="#3a5a44"/><rect x="1218.65" y="141.7" width="1.7" height="4.85" fill="#4e4a2c"/><rect x="1225" y="141.7" width="7" height="4.85" fill="#58355a"/><rect x="1232" y="141.7" width="4" height="4.85" fill="#3a5a44"/><rect x="1236" y="141.7" width="9" height="4.85" fill="#2e4460"/><rect x="1245" y="141.7" width="5" height="4.85" fill="#4a3a68"/><rect x="1252.65" y="141.7" width="1.7" height="4.85" fill="#3a5a44"/><rect x="1275.65" y="141.7" width="1.7" height="4.85" fill="#3a5a44"/><rect x="1286" y="141.7" width="6" height="4.85" fill="#36523e"/><rect x="1292" y="141.7" width="4" height="4.85" fill="#3a5a44"/><rect x="1296.65" y="141.7" width="1.7" height="4.85" fill="#3a5a44"/><rect x="1301" y="141.7" width="4" height="4.85" fill="#3e4a5c"/><rect x="1305" y="141.7" width="6" height="4.85" fill="#3a5a44"/><rect x="1313" y="141.7" width="4" height="4.85" fill="#3a5a44"/><rect x="1317" y="141.7" width="4" height="4.85" fill="#4a3a68"/><rect x="1324" y="141.7" width="3" height="4.85" fill="#4e4a2c"/><rect x="1327" y="141.7" width="4" height="4.85" fill="#3a5a44"/><rect x="1341" y="141.7" width="4" height="4.85" fill="#4a3a68"/><rect x="1345.65" y="141.7" width="1.35" height="4.85" fill="#4a3a68"/><rect x="1347" y="141.7" width="4" height="4.85" fill="#4a3a68"/><rect x="1357.65" y="141.7" width="1.7" height="4.85" fill="#3a5a44"/><rect x="1360" y="141.7" width="5" height="4.85" fill="#58384f"/><rect x="1365.65" y="141.7" width="1.7" height="4.85" fill="#4a3a68"/><rect x="1464.65" y="141.7" width="1.7" height="4.85" fill="#3a5a44"/><rect x="1473.65" y="141.7" width="1.7" height="4.85" fill="#3a5a44"/><rect x="1494.65" y="141.7" width="1.7" height="4.85" fill="#3e4a5c"/><rect x="0" y="146.25" width="136" height="4.85" fill="#504060"/><rect x="175" y="146.25" width="64" height="4.85" fill="#502c4c"/><rect x="239" y="146.25" width="35" height="4.85" fill="#593f52"/><rect x="274" y="146.25" width="22" height="4.85" fill="#3e3660"/><rect x="303.65" y="146.25" width="1.7" height="4.85" fill="#4a3a68"/><rect x="313.65" y="146.25" width="1.7" height="4.85" fill="#4a3a68"/><rect x="322" y="146.25" width="12" height="4.85" fill="#58304e"/><rect x="334" y="146.25" width="6" height="4.85" fill="#593f52"/><rect x="340" y="146.25" width="4" height="4.85" fill="#4a3a68"/><rect x="344.65" y="146.25" width="1.7" height="4.85" fill="#4a3a68"/><rect x="347.65" y="146.25" width="1.7" height="4.85" fill="#4a3a68"/><rect x="419" y="146.25" width="65" height="4.85" fill="#34523c"/><rect x="507" y="146.25" width="30" height="4.85" fill="#30474f"/><rect x="550.65" y="146.25" width="1.7" height="4.85" fill="#50342a"/><rect x="569" y="146.25" width="16" height="4.85" fill="#30474f"/><rect x="614.65" y="146.25" width="2" height="4.85" fill="#3a5a44"/><rect x="616.65" y="146.25" width="1.7" height="4.85" fill="#3a5a44"/><rect x="678" y="146.25" width="58.65" height="4.85" fill="#504060"/><rect x="736.65" y="146.25" width="1.7" height="4.85" fill="#4e4a2c"/><rect x="756" y="146.25" width="18" height="4.85" fill="#502c4c"/><rect x="774" y="146.25" width="11" height="4.85" fill="#593f52"/><rect x="785" y="146.25" width="8" height="4.85" fill="#3e3660"/><rect x="793.65" y="146.25" width="1.7" height="4.85" fill="#4a3a68"/><rect x="796.65" y="146.25" width="1.7" height="4.85" fill="#4a3a68"/><rect x="804.65" y="146.25" width="1.7" height="4.85" fill="#58384f"/><rect x="811.65" y="146.25" width="1.7" height="4.85" fill="#3a5a44"/><rect x="841" y="146.25" width="5" height="4.85" fill="#4a3a68"/><rect x="870" y="146.25" width="4" height="4.85" fill="#58384f"/><rect x="877" y="146.25" width="5" height="4.85" fill="#4a3a68"/><rect x="882" y="146.25" width="4" height="4.85" fill="#4a3a68"/><rect x="974" y="146.25" width="14" height="4.85" fill="#44365c"/><rect x="1017.65" y="146.25" width="1.7" height="4.85" fill="#3e4a5c"/><rect x="1022" y="146.25" width="17" height="4.85" fill="#35475a"/><rect x="1039.65" y="146.25" width="1.7" height="4.85" fill="#4a3a68"/><rect x="1045" y="146.25" width="5" height="4.85" fill="#35475a"/><rect x="1051.65" y="146.25" width="1.7" height="4.85" fill="#4a3a68"/><rect x="1064" y="146.25" width="65" height="4.85" fill="#3a4858"/><rect x="1166" y="146.25" width="8" height="4.85" fill="#30474f"/><rect x="1176" y="146.25" width="7" height="4.85" fill="#30474f"/><rect x="1186" y="146.25" width="6" height="4.85" fill="#36503c"/><rect x="1192" y="146.25" width="4" height="4.85" fill="#3e4a5c"/><rect x="1196" y="146.25" width="6" height="4.85" fill="#3a4a5e"/><rect x="1206" y="146.25" width="6" height="4.85" fill="#3a5a44"/><rect x="1213.65" y="146.25" width="1.7" height="4.85" fill="#3a5a44"/><rect x="1218.65" y="146.25" width="1.7" height="4.85" fill="#3a5a44"/><rect x="1225" y="146.25" width="6" height="4.85" fill="#3a5a44"/><rect x="1231" y="146.25" width="4" height="4.85" fill="#3a5a44"/><rect x="1237" y="146.25" width="6" height="4.85" fill="#58384f"/><rect x="1243.65" y="146.25" width="1.35" height="4.85" fill="#4a3a68"/><rect x="1245" y="146.25" width="5" height="4.85" fill="#4a3a68"/><rect x="1252.65" y="146.25" width="1.7" height="4.85" fill="#3a5a44"/><rect x="1286.65" y="146.25" width="2" height="4.85" fill="#4a3a68"/><rect x="1288.65" y="146.25" width="1.7" height="4.85" fill="#4a3a68"/><rect x="1297.65" y="146.25" width="1.7" height="4.85" fill="#3a5a44"/><rect x="1301" y="146.25" width="4" height="4.85" fill="#3a5a44"/><rect x="1305.65" y="146.25" width="1.7" height="4.85" fill="#56304e"/><rect x="1313.65" y="146.25" width="1.7" height="4.85" fill="#4a3a68"/><rect x="1317" y="146.25" width="4" height="4.85" fill="#4a3a68"/><rect x="1325.65" y="146.25" width="1.7" height="4.85" fill="#3a5a44"/><rect x="1341" y="146.25" width="4" height="4.85" fill="#4a3a68"/><rect x="1345.65" y="146.25" width="1.35" height="4.85" fill="#4a3a68"/><rect x="1347" y="146.25" width="4" height="4.85" fill="#4a3a68"/><rect x="1357.65" y="146.25" width="1.7" height="4.85" fill="#3a5a44"/><rect x="1360" y="146.25" width="5" height="4.85" fill="#3a5a44"/><rect x="1365.65" y="146.25" width="1.7" height="4.85" fill="#4a3a68"/><rect x="1473.65" y="146.25" width="1.7" height="4.85" fill="#4a3a68"/><rect x="1494.65" y="146.25" width="1.7" height="4.85" fill="#3e4a5c"/><rect x="0" y="150.8" width="106" height="4.85" fill="#50304e"/><rect x="106" y="150.8" width="20" height="4.85" fill="#4e2058"/><rect x="126" y="150.8" width="5" height="4.85" fill="#3a5a44"/><rect x="131.65" y="150.8" width="1.7" height="4.85" fill="#4a3a68"/><rect x="135.65" y="150.8" width="1.7" height="4.85" fill="#4a3a68"/><rect x="175" y="150.8" width="62" height="4.85" fill="#34523c"/><rect x="239" y="150.8" width="19" height="4.85" fill="#2e5040"/><rect x="258" y="150.8" width="4" height="4.85" fill="#3a5a44"/><rect x="274" y="150.8" width="18" height="4.85" fill="#36523e"/><rect x="303.65" y="150.8" width="1.7" height="4.85" fill="#3a5a44"/><rect x="322" y="150.8" width="12" height="4.85" fill="#36523e"/><rect x="334" y="150.8" width="4" height="4.85" fill="#3a5a44"/><rect x="339.65" y="150.8" width="1.7" height="4.85" fill="#3a5a44"/><rect x="347.65" y="150.8" width="1.7" height="4.85" fill="#4a3a68"/><rect x="419" y="150.8" width="20" height="4.85" fill="#43365a"/><rect x="502.65" y="150.8" width="1.7" height="4.85" fill="#3e4a5c"/><rect x="507" y="150.8" width="29" height="4.85" fill="#404a62"/><rect x="550.65" y="150.8" width="1.7" height="4.85" fill="#4a3a68"/><rect x="569" y="150.8" width="14.65" height="4.85" fill="#404a62"/><rect x="583.65" y="150.8" width="1.7" height="4.85" fill="#4a3a68"/><rect x="614.65" y="150.8" width="1.7" height="4.85" fill="#4a3a68"/><rect x="678" y="150.8" width="43" height="4.85" fill="#56344e"/><rect x="721" y="150.8" width="11" height="4.85" fill="#4e2058"/><rect x="736.65" y="150.8" width="1.7" height="4.85" fill="#4a3a68"/><rect x="756" y="150.8" width="18" height="4.85" fill="#36523e"/><rect x="774" y="150.8" width="6.65" height="4.85" fill="#3a5a44"/><rect x="780.65" y="150.8" width="1.7" height="4.85" fill="#3a5a44"/><rect x="785" y="150.8" width="7" height="4.85" fill="#3a5a44"/><rect x="792.65" y="150.8" width="1.7" height="4.85" fill="#3a5a44"/><rect x="804.65" y="150.8" width="1.7" height="4.85" fill="#4a3a68"/><rect x="807.65" y="150.8" width="1.7" height="4.85" fill="#3a5a44"/><rect x="810.65" y="150.8" width="1.7" height="4.85" fill="#3a5a44"/><rect x="841.65" y="150.8" width="1.7" height="4.85" fill="#58384f"/><rect x="872.65" y="150.8" width="1.7" height="4.85" fill="#3a5a44"/><rect x="877" y="150.8" width="5" height="4.85" fill="#4a3a68"/><rect x="883.65" y="150.8" width="1.7" height="4.85" fill="#4a3a68"/><rect x="1022" y="150.8" width="17" height="4.85" fill="#363260"/><rect x="1039.65" y="150.8" width="1.7" height="4.85" fill="#4a3a68"/><rect x="1045" y="150.8" width="5" height="4.85" fill="#3e3868"/><rect x="1064" y="150.8" width="11" height="4.85" fill="#454a68"/><rect x="1075.65" y="150.8" width="1.7" height="4.85" fill="#4e4a2c"/><rect x="1078.65" y="150.8" width="1.7" height="4.85" fill="#58384f"/><rect x="1086" y="150.8" width="3.65" height="4.85" fill="#58384f"/><rect x="1089.65" y="150.8" width="1.35" height="4.85" fill="#3a5a44"/><rect x="1091" y="150.8" width="3.65" height="4.85" fill="#58384f"/><rect x="1094.65" y="150.8" width="1.7" height="4.85" fill="#3a5a44"/><rect x="1166" y="150.8" width="8" height="4.85" fill="#5a3858"/><rect x="1176" y="150.8" width="5" height="4.85" fill="#58384f"/><rect x="1181" y="150.8" width="4" height="4.85" fill="#58384f"/><rect x="1185.65" y="150.8" width="1.7" height="4.85" fill="#4a3a68"/><rect x="1193.65" y="150.8" width="1.7" height="4.85" fill="#4a3a68"/><rect x="1196" y="150.8" width="6" height="4.85" fill="#3a4a62"/><rect x="1213.65" y="150.8" width="1.7" height="4.85" fill="#4a3a68"/><rect x="1218.65" y="150.8" width="1.7" height="4.85" fill="#4a3a68"/><rect x="1225.65" y="150.8" width="1.7" height="4.85" fill="#58384f"/><rect x="1230.65" y="150.8" width="1.7" height="4.85" fill="#4a3a68"/><rect x="1237" y="150.8" width="4" height="4.85" fill="#58384f"/><rect x="1243.65" y="150.8" width="1.35" height="4.85" fill="#4a3a68"/><rect x="1245" y="150.8" width="5" height="4.85" fill="#58384f"/><rect x="1297.65" y="150.8" width="1.7" height="4.85" fill="#4a3a68"/><rect x="1301.65" y="150.8" width="1.7" height="4.85" fill="#4a3a68"/><rect x="1305.65" y="150.8" width="1.7" height="4.85" fill="#4a3a68"/><rect x="1313.65" y="150.8" width="1.7" height="4.85" fill="#4a3a68"/><rect x="1317" y="150.8" width="4" height="4.85" fill="#4a3a68"/><rect x="1341.65" y="150.8" width="1.7" height="4.85" fill="#4a3a68"/><rect x="1345.65" y="150.8" width="1.35" height="4.85" fill="#4a3a68"/><rect x="1347" y="150.8" width="4" height="4.85" fill="#4a3a68"/><rect x="1357.65" y="150.8" width="1.7" height="4.85" fill="#3a5a44"/><rect x="1360" y="150.8" width="5" height="4.85" fill="#3a4a5c"/><rect x="0" y="155.35" width="66" height="4.85" fill="#502c4c"/><rect x="66" y="155.35" width="40" height="4.85" fill="#593f52"/><rect x="106" y="155.35" width="20" height="4.85" fill="#3e3660"/><rect x="127.65" y="155.35" width="1.7" height="4.85" fill="#3a5a44"/><rect x="135.65" y="155.35" width="1.7" height="4.85" fill="#4a3a68"/><rect x="175" y="155.35" width="33" height="4.85" fill="#593f52"/><rect x="208" y="155.35" width="13" height="4.85" fill="#3a5544"/><rect x="221.65" y="155.35" width="1.7" height="4.85" fill="#3a5a44"/><rect x="224.65" y="155.35" width="1.7" height="4.85" fill="#4a3a68"/><rect x="239" y="155.35" width="19" height="4.85" fill="#3a5a4c"/><rect x="274" y="155.35" width="5" height="4.85" fill="#4a3a68"/><rect x="303.65" y="155.35" width="1.7" height="4.85" fill="#3a5a44"/><rect x="322" y="155.35" width="5" height="4.85" fill="#58384f"/><rect x="327.65" y="155.35" width="2" height="4.85" fill="#3a5a44"/><rect x="329.65" y="155.35" width="1.7" height="4.85" fill="#3a5a44"/><rect x="334.65" y="155.35" width="1.7" height="4.85" fill="#3a5a44"/><rect x="339.65" y="155.35" width="1.7" height="4.85" fill="#3a5a44"/><rect x="348.65" y="155.35" width="1.7" height="4.85" fill="#58384f"/><rect x="506.65" y="155.35" width="1.7" height="4.85" fill="#4a3a68"/><rect x="550.65" y="155.35" width="1.7" height="4.85" fill="#4a3a68"/><rect x="568.65" y="155.35" width="1.7" height="4.85" fill="#3a5a44"/><rect x="678" y="155.35" width="23" height="4.85" fill="#502c4c"/><rect x="701" y="155.35" width="20" height="4.85" fill="#593f52"/><rect x="721" y="155.35" width="10" height="4.85" fill="#3e3660"/><rect x="731" y="155.35" width="4" height="4.85" fill="#4a3a68"/><rect x="735" y="155.35" width="4" height="4.85" fill="#58384f"/><rect x="756" y="155.35" width="9" height="4.85" fill="#58384f"/><rect x="765.65" y="155.35" width="1.7" height="4.85" fill="#3a5a44"/><rect x="768.65" y="155.35" width="1.7" height="4.85" fill="#3a5a44"/><rect x="774" y="155.35" width="7" height="4.85" fill="#3a5544"/><rect x="805.65" y="155.35" width="1.7" height="4.85" fill="#4a3a68"/><rect x="808.65" y="155.35" width="1.7" height="4.85" fill="#3a5a44"/><rect x="811.65" y="155.35" width="1.7" height="4.85" fill="#58384f"/><rect x="842.65" y="155.35" width="1.7" height="4.85" fill="#4a3a68"/><rect x="877.65" y="155.35" width="1.7" height="4.85" fill="#3a5a44"/><rect x="883.65" y="155.35" width="1.7" height="4.85" fill="#4a3a68"/><rect x="1022" y="155.35" width="4" height="4.85" fill="#4a3a68"/><rect x="1026.65" y="155.35" width="1.7" height="4.85" fill="#3a5a44"/><rect x="1040.65" y="155.35" width="1.7" height="4.85" fill="#4a3a68"/><rect x="1064" y="155.35" width="10" height="4.85" fill="#2e3060"/><rect x="1075.65" y="155.35" width="1.7" height="4.85" fill="#4a3a68"/><rect x="1086" y="155.35" width="5" height="4.85" fill="#3a5a44"/><rect x="1091" y="155.35" width="3.65" height="4.85" fill="#58384f"/><rect x="1094.65" y="155.35" width="1.7" height="4.85" fill="#3a5a44"/><rect x="1175.65" y="155.35" width="1.7" height="4.85" fill="#3a5a44"/><rect x="1181.65" y="155.35" width="1.7" height="4.85" fill="#3a5a44"/><rect x="1195.65" y="155.35" width="1.7" height="4.85" fill="#4a3a68"/><rect x="1213.65" y="155.35" width="1.7" height="4.85" fill="#4a3a68"/><rect x="1218.65" y="155.35" width="1.7" height="4.85" fill="#4a3a68"/><rect x="1225.65" y="155.35" width="1.7" height="4.85" fill="#3a5a44"/><rect x="1230.65" y="155.35" width="1.7" height="4.85" fill="#3a5a44"/><rect x="1237.65" y="155.35" width="1.7" height="4.85" fill="#3a5a44"/><rect x="1242.65" y="155.35" width="1.7" height="4.85" fill="#3a5a44"/><rect x="1245" y="155.35" width="4" height="4.85" fill="#58384f"/><rect x="1297.65" y="155.35" width="1.7" height="4.85" fill="#4a3a68"/><rect x="1305.65" y="155.35" width="1.7" height="4.85" fill="#3a5a44"/><rect x="1316" y="155.35" width="4" height="4.85" fill="#3a5a44"/><rect x="1357.65" y="155.35" width="1.7" height="4.85" fill="#3a5a44"/><rect x="0" y="159.9" width="51" height="4.85" fill="#593f52"/><rect x="66" y="159.9" width="25" height="4.85" fill="#2e5040"/><rect x="175" y="159.9" width="20" height="4.85" fill="#3a5a4c"/><rect x="195.65" y="159.9" width="1.35" height="4.85" fill="#3a5a44"/><rect x="197" y="159.9" width="4" height="4.85" fill="#3a5a44"/><rect x="208" y="159.9" width="10" height="4.85" fill="#593f52"/><rect x="224.65" y="159.9" width="1.7" height="4.85" fill="#3a5a44"/><rect x="239" y="159.9" width="17" height="4.85" fill="#36523e"/><rect x="322" y="159.9" width="4" height="4.85" fill="#3a5a44"/><rect x="326.65" y="159.9" width="1.7" height="4.85" fill="#3a5a44"/><rect x="334.65" y="159.9" width="1.7" height="4.85" fill="#3a5a44"/><rect x="348.65" y="159.9" width="1.7" height="4.85" fill="#3a5a44"/><rect x="678" y="159.9" width="17.65" height="4.85" fill="#593f52"/><rect x="695.65" y="159.9" width="1.7" height="4.85" fill="#3a5a44"/><rect x="701" y="159.9" width="13" height="4.85" fill="#2e5040"/><rect x="731.65" y="159.9" width="1.7" height="4.85" fill="#4a3a68"/><rect x="734.65" y="159.9" width="2" height="4.85" fill="#4a3a68"/><rect x="736.65" y="159.9" width="1.7" height="4.85" fill="#4a3a68"/><rect x="756" y="159.9" width="5" height="4.85" fill="#3a5a44"/><rect x="762.65" y="159.9" width="1.7" height="4.85" fill="#3a5a44"/><rect x="766.65" y="159.9" width="1.7" height="4.85" fill="#4a3a68"/><rect x="774" y="159.9" width="6" height="4.85" fill="#3a5a44"/><rect x="803" y="159.9" width="4" height="4.85" fill="#3a5a44"/><rect x="807.65" y="159.9" width="1.7" height="4.85" fill="#3a5a44"/><rect x="811.65" y="159.9" width="1.7" height="4.85" fill="#3a5a44"/><rect x="842.65" y="159.9" width="1.7" height="4.85" fill="#58384f"/><rect x="883.65" y="159.9" width="1.7" height="4.85" fill="#3a5a44"/><rect x="1040.65" y="159.9" width="1.7" height="4.85" fill="#4a3a68"/><rect x="1064" y="159.9" width="8" height="4.85" fill="#2a4a42"/><rect x="1072.65" y="159.9" width="2" height="4.85" fill="#3a5a44"/><rect x="1074.65" y="159.9" width="1.7" height="4.85" fill="#4a3a68"/><rect x="1077.65" y="159.9" width="1.7" height="4.85" fill="#3a5a44"/><rect x="1082.65" y="159.9" width="1.7" height="4.85" fill="#4a3a68"/><rect x="1086.65" y="159.9" width="1.7" height="4.85" fill="#4a3a68"/><rect x="1089.65" y="159.9" width="1.35" height="4.85" fill="#3a5a44"/><rect x="1091" y="159.9" width="5" height="4.85" fill="#4a3a68"/><rect x="1182.65" y="159.9" width="1.7" height="4.85" fill="#58384f"/><rect x="1218.65" y="159.9" width="1.7" height="4.85" fill="#3a5a44"/><rect x="1225.65" y="159.9" width="1.7" height="4.85" fill="#3a5a44"/><rect x="1230.65" y="159.9" width="1.7" height="4.85" fill="#3a5a44"/><rect x="1237" y="159.9" width="4" height="4.85" fill="#3a5a44"/><rect x="1242.65" y="159.9" width="1.7" height="4.85" fill="#3a5a44"/><rect x="1246.65" y="159.9" width="1.7" height="4.85" fill="#58384f"/><rect x="1318.65" y="159.9" width="1.7" height="4.85" fill="#4a3a68"/><rect x="0" y="164.45" width="23" height="4.85" fill="#2e5040"/><rect x="23" y="164.45" width="9" height="4.85" fill="#3a5a48"/><rect x="32" y="164.45" width="7" height="4.85" fill="#3e5a48"/><rect x="50.65" y="164.45" width="1.7" height="4.85" fill="#4a3a68"/><rect x="66" y="164.45" width="17" height="4.85" fill="#3c5a48"/><rect x="175" y="164.45" width="17.65" height="4.85" fill="#36523e"/><rect x="192.65" y="164.45" width="1.7" height="4.85" fill="#3a5a44"/><rect x="196" y="164.45" width="4" height="4.85" fill="#4a3a68"/><rect x="207.65" y="164.45" width="1.7" height="4.85" fill="#4a3a68"/><rect x="224.65" y="164.45" width="1.7" height="4.85" fill="#4a3a68"/><rect x="239" y="164.45" width="9.65" height="4.85" fill="#3a5a44"/><rect x="248.65" y="164.45" width="1.7" height="4.85" fill="#4a3a68"/><rect x="322" y="164.45" width="4" height="4.85" fill="#3a5a44"/><rect x="333.65" y="164.45" width="1.7" height="4.85" fill="#4a3a68"/><rect x="346.65" y="164.45" width="1.7" height="4.85" fill="#3a5a44"/><rect x="678" y="164.45" width="8" height="4.85" fill="#3a5a48"/><rect x="686.65" y="164.45" width="1.7" height="4.85" fill="#3a5a44"/><rect x="689.65" y="164.45" width="1.7" height="4.85" fill="#3a5a44"/><rect x="695.65" y="164.45" width="1.7" height="4.85" fill="#4a3a68"/><rect x="701" y="164.45" width="8.65" height="4.85" fill="#3c5a48"/><rect x="709.65" y="164.45" width="1.7" height="4.85" fill="#4a3a68"/><rect x="733.65" y="164.45" width="1.7" height="4.85" fill="#4a3a68"/><rect x="756" y="164.45" width="4" height="4.85" fill="#3a5a44"/><rect x="760.65" y="164.45" width="1.7" height="4.85" fill="#3a5a44"/><rect x="774" y="164.45" width="3.65" height="4.85" fill="#3a5a44"/><rect x="777.65" y="164.45" width="1.7" height="4.85" fill="#4a3a68"/><rect x="803.65" y="164.45" width="1.7" height="4.85" fill="#3a5a44"/><rect x="807.65" y="164.45" width="1.7" height="4.85" fill="#3a5a44"/><rect x="811.65" y="164.45" width="1.7" height="4.85" fill="#3a5a44"/><rect x="1064" y="164.45" width="8" height="4.85" fill="#36503c"/><rect x="1074" y="164.45" width="4" height="4.85" fill="#3a5a44"/><rect x="1078.65" y="164.45" width="1.7" height="4.85" fill="#4a3a68"/><rect x="1086.65" y="164.45" width="1.7" height="4.85" fill="#3a5a44"/><rect x="1091" y="164.45" width="5" height="4.85" fill="#3a5a44"/><rect x="1218.65" y="164.45" width="1.7" height="4.85" fill="#3a5a44"/><rect x="1224.65" y="164.45" width="2" height="4.85" fill="#3a5a44"/><rect x="1226.65" y="164.45" width="1.7" height="4.85" fill="#3a5a44"/><rect x="1230.65" y="164.45" width="1.7" height="4.85" fill="#3a5a44"/><rect x="1236.65" y="164.45" width="1.7" height="4.85" fill="#3a5a44"/><rect x="1246.65" y="164.45" width="1.7" height="4.85" fill="#3a5a44"/><rect x="0" y="169" width="13.65" height="4.85" fill="#36523e"/><rect x="13.65" y="169" width="1.7" height="4.85" fill="#4a3a68"/><rect x="32" y="169" width="5" height="4.85" fill="#3a5a44"/><rect x="37.65" y="169" width="1.7" height="4.85" fill="#4a3a68"/><rect x="50.65" y="169" width="1.7" height="4.85" fill="#4a3a68"/><rect x="66.65" y="169" width="1.7" height="4.85" fill="#4a3a68"/><rect x="69" y="169" width="4" height="4.85" fill="#3a5a44"/><rect x="175" y="169" width="8" height="4.85" fill="#3a5a48"/><rect x="192.65" y="169" width="1.7" height="4.85" fill="#3a5a44"/><rect x="323.65" y="169" width="1.7" height="4.85" fill="#4a3a68"/><rect x="346.65" y="169" width="1.7" height="4.85" fill="#3a5a44"/><rect x="678" y="169" width="4.65" height="4.85" fill="#3a5a44"/><rect x="682.65" y="169" width="1.7" height="4.85" fill="#4a3a68"/><rect x="685.65" y="169" width="1.7" height="4.85" fill="#4a3a68"/><rect x="701.65" y="169" width="2" height="4.85" fill="#4a3a68"/><rect x="703.65" y="169" width="1.7" height="4.85" fill="#58384f"/><rect x="755.65" y="169" width="1.7" height="4.85" fill="#4a3a68"/><rect x="760.65" y="169" width="1.7" height="4.85" fill="#3a5a44"/><rect x="773.65" y="169" width="1.7" height="4.85" fill="#4a3a68"/><rect x="803.65" y="169" width="1.7" height="4.85" fill="#3a5a44"/><rect x="1064" y="169" width="8" height="4.85" fill="#3a5a4c"/><rect x="1076.65" y="169" width="1.7" height="4.85" fill="#4a3a68"/><rect x="1086.65" y="169" width="1.7" height="4.85" fill="#3a5a44"/><rect x="1091" y="169" width="4" height="4.85" fill="#58384f"/><rect x="1224.65" y="169" width="1.7" height="4.85" fill="#3a5a44"/><rect x="1237.65" y="169" width="1.7" height="4.85" fill="#3a5a44"/><rect x="1246.65" y="169" width="1.7" height="4.85" fill="#3a5a44"/><rect x="32.65" y="173.55" width="1.7" height="4.85" fill="#3a5a44"/><rect x="51.65" y="173.55" width="1.7" height="4.85" fill="#4a3a68"/><rect x="66.65" y="173.55" width="1.7" height="4.85" fill="#4a3a68"/><rect x="175.65" y="173.55" width="1.7" height="4.85" fill="#3a5a44"/><rect x="324.65" y="173.55" width="1.7" height="4.85" fill="#4a3a68"/><rect x="346.65" y="173.55" width="1.7" height="4.85" fill="#3a5a44"/><rect x="678.65" y="173.55" width="1.7" height="4.85" fill="#56304e"/><rect x="689.65" y="173.55" width="1.7" height="4.85" fill="#3a5a44"/><rect x="701.65" y="173.55" width="1.7" height="4.85" fill="#4a3a68"/><rect x="803.65" y="173.55" width="1.7" height="4.85" fill="#3a5a44"/><rect x="1064" y="173.55" width="7" height="4.85" fill="#503060"/><rect x="1074.65" y="173.55" width="1.7" height="4.85" fill="#58384f"/><rect x="1086.65" y="173.55" width="1.7" height="4.85" fill="#3a5a44"/><rect x="1091.65" y="173.55" width="1.7" height="4.85" fill="#3a5a44"/><rect x="1246.65" y="173.55" width="1.7" height="4.85" fill="#3a5a44"/><rect x="32.65" y="178.1" width="1.7" height="4.85" fill="#56304e"/><rect x="324.65" y="178.1" width="1.7" height="4.85" fill="#4a3a68"/><rect x="678.65" y="178.1" width="1.7" height="4.85" fill="#4a3a68"/><rect x="689.65" y="178.1" width="1.7" height="4.85" fill="#56304e"/><rect x="1063" y="178.1" width="3" height="4.85" fill="#58384f"/><rect x="1066" y="178.1" width="4" height="4.85" fill="#3a5a44"/><rect x="1074.65" y="178.1" width="1.7" height="4.85" fill="#4a3a68"/><rect x="1080.65" y="178.1" width="1.7" height="4.85" fill="#4a3a68"/><rect x="1091.65" y="178.1" width="1.7" height="4.85" fill="#4a3a68"/><rect x="32.65" y="182.65" width="1.7" height="4.85" fill="#4a3a68"/><rect x="689.65" y="182.65" width="1.7" height="4.85" fill="#4a3a68"/><rect x="1063" y="182.65" width="7" height="4.85" fill="#58355a"/><rect x="1063" y="187.2" width="6" height="4.85" fill="#563458"/><rect x="1064" y="191.75" width="5" height="4.85" fill="#43355d"/><rect x="1065" y="196.3" width="4" height="4.85" fill="#395541"/><rect x="1066.65" y="200.85" width="1.7" height="4.85" fill="#43355d"/></g>
<g id="main"><rect x="0" y="283" width="1540" height="38" fill="#325033"/><rect x="0" y="323" width="1534" height="38" fill="#464e5f"/><rect x="1536" y="323" width="4" height="38" fill="#3a5a40"/><rect x="0" y="363" width="1417" height="38" fill="#25463a"/><rect x="1419" y="363" width="44" height="38" fill="#2c4a3c"/><rect x="1465" y="363" width="36" height="38" fill="#2e4a4a"/><rect x="1503" y="363" width="21" height="38" fill="#2e4a44"/><rect x="1526" y="363" width="4" height="38" fill="#1f4a44"/><rect x="0" y="403" width="1417" height="38" fill="#263654"/><rect x="1465" y="403" width="36" height="38" fill="#343e5a"/><rect x="1503" y="403" width="21" height="38" fill="#3e4a5c"/><rect x="1526" y="403" width="4" height="38" fill="#4a5468"/><rect x="0" y="443" width="1416" height="38" fill="#2d3b58"/><rect x="1465" y="443" width="36" height="38" fill="#2a3858"/><rect x="1503" y="443" width="21" height="38" fill="#424e5e"/><rect x="1526" y="443" width="4" height="38" fill="#3e4a62"/><rect x="0" y="483" width="418" height="38" fill="#524e38"/><rect x="420" y="483" width="257" height="38" fill="#4f3128"/><rect x="679" y="483" width="162" height="38" fill="#3e421e"/><rect x="843" y="483" width="130" height="38" fill="#3c4858"/><rect x="975" y="483" width="88" height="38" fill="#403f1e"/><rect x="1065" y="483" width="68" height="38" fill="#2c4a47"/><rect x="1135" y="483" width="30" height="38" fill="#482c1c"/><rect x="1167" y="483" width="28" height="38" fill="#4a3626"/><rect x="1197" y="483" width="27" height="38" fill="#424a2c"/><rect x="1226" y="483" width="26" height="38" fill="#485034"/><rect x="1254" y="483" width="16" height="38" fill="#363a5c"/><rect x="1272" y="483" width="13" height="38" fill="#444c2e"/><rect x="1287" y="483" width="13" height="38" fill="#5a4640"/><rect x="1302" y="483" width="11" height="38" fill="#4e4830"/><rect x="1315" y="483" width="8" height="38" fill="#3c4424"/><rect x="1325" y="483" width="8" height="38" fill="#3a3a14"/><rect x="1335" y="483" width="3" height="38" fill="#36425a"/><rect x="1342" y="483" width="4" height="38" fill="#4a5068"/><rect x="1348" y="483" width="3" height="38" fill="#5a4640"/><rect x="1353" y="483" width="1" height="38" fill="#58384f" opacity=".7"/><rect x="1357" y="483" width="1" height="38" fill="#4a3a68" opacity=".7"/><rect x="1360" y="483" width="5" height="38" fill="#5a4a38"/><rect x="1366" y="483" width="1" height="38" fill="#4a4a40" opacity=".7"/><rect x="1465" y="483" width="20" height="38" fill="#42584e"/><rect x="1487" y="483" width="7" height="38" fill="#36544c"/><rect x="1496" y="483" width="1" height="38" fill="#2e4a4c" opacity=".7"/><rect x="1498" y="483" width="1" height="38" fill="#4a3a68" opacity=".7"/><rect x="1503" y="483" width="9" height="38" fill="#4e5030"/><rect x="1514" y="483" width="8" height="38" fill="#3e4a28"/><rect x="1526" y="483" width="3" height="38" fill="#3a4a20"/><rect x="0" y="523" width="418" height="38" fill="#29434d"/><rect x="420" y="523" width="257" height="38" fill="#29434d"/><rect x="679" y="523" width="162" height="38" fill="#29434d"/><rect x="843" y="523" width="27" height="38" fill="#2e3c58"/><rect x="872" y="523" width="27" height="38" fill="#464a62"/><rect x="901" y="523" width="7" height="38" fill="#3e4420"/><rect x="910" y="523" width="3" height="38" fill="#5a3a2a"/><rect x="914" y="523" width="1" height="38" fill="#4e4a2c" opacity=".7"/><rect x="917" y="523" width="1" height="38" fill="#4e4a2c" opacity=".7"/><rect x="927" y="523" width="2" height="38" fill="#3e4a5c"/><rect x="932" y="523" width="3" height="38" fill="#3e4a5c"/><rect x="975" y="523" width="88" height="38" fill="#29434d"/><rect x="1065" y="523" width="68" height="38" fill="#36425a"/><rect x="1135" y="523" width="30" height="38" fill="#2a424c"/><rect x="1167" y="523" width="28" height="38" fill="#2a424c"/><rect x="1197" y="523" width="27" height="38" fill="#2a424c"/><rect x="1226" y="523" width="26" height="38" fill="#2a424c"/><rect x="1254" y="523" width="13" height="38" fill="#264a34"/><rect x="1268" y="523" width="2" height="38" fill="#5a4a60"/><rect x="1272" y="523" width="13" height="38" fill="#2a424c"/><rect x="1287" y="523" width="13" height="38" fill="#2a424c"/><rect x="1302" y="523" width="11" height="38" fill="#2a424c"/><rect x="1315" y="523" width="8" height="38" fill="#2c444e"/><rect x="1325" y="523" width="8" height="38" fill="#2a424c"/><rect x="1336" y="523" width="1" height="38" fill="#58384f" opacity=".7"/><rect x="1342" y="523" width="2" height="38" fill="#36406a"/><rect x="1346" y="523" width="1" height="38" fill="#3a5a44" opacity=".7"/><rect x="1348" y="523" width="3" height="38" fill="#2a424c"/><rect x="1353" y="523" width="1" height="38" fill="#3a5a44" opacity=".7"/><rect x="1357" y="523" width="1" height="38" fill="#3a5a44" opacity=".7"/><rect x="1360" y="523" width="5" height="38" fill="#2a424c"/><rect x="1367" y="523" width="1" height="38" fill="#3a5a44" opacity=".7"/><rect x="1465" y="523" width="20" height="38" fill="#2e4250"/><rect x="1487" y="523" width="7" height="38" fill="#26405a"/><rect x="1496" y="523" width="1" height="38" fill="#3e4a5c" opacity=".7"/><rect x="1503" y="523" width="9" height="38" fill="#522850"/><rect x="1514" y="523" width="8" height="38" fill="#4e2256"/><rect x="1526" y="523" width="3" height="38" fill="#4a3a68"/><rect x="0" y="563" width="359" height="38" fill="#2e4156"/><rect x="361" y="563" width="55" height="38" fill="#524f2f"/><rect x="417" y="563" width="1" height="38" fill="#3a5a44" opacity=".7"/><rect x="420" y="563" width="201" height="38" fill="#2e4156"/><rect x="623" y="563" width="53" height="38" fill="#4f2f27"/><rect x="677" y="563" width="1" height="38" fill="#3e4a5c" opacity=".7"/><rect x="679" y="563" width="138" height="38" fill="#2e4156"/><rect x="819" y="563" width="21" height="38" fill="#4a4220"/><rect x="843" y="563" width="8" height="38" fill="#454a62"/><rect x="854" y="563" width="4" height="38" fill="#5a3a60"/><rect x="872" y="563" width="26" height="38" fill="#2e3460"/><rect x="901" y="563" width="7" height="38" fill="#3e3a66"/><rect x="910" y="563" width="3" height="38" fill="#2e4a4c"/><rect x="914" y="563" width="2" height="38" fill="#3e4a5c"/><rect x="917" y="563" width="1" height="38" fill="#4a3a68" opacity=".7"/><rect x="921" y="563" width="2" height="38" fill="#5a3a60"/><rect x="927" y="563" width="2" height="38" fill="#3e4a5c"/><rect x="932" y="563" width="2" height="38" fill="#3a5a44"/><rect x="975" y="563" width="85" height="38" fill="#2e4056"/><rect x="1065" y="563" width="68" height="38" fill="#2e3a5c"/><rect x="1135" y="563" width="28" height="38" fill="#2e4052"/><rect x="1167" y="563" width="28" height="38" fill="#2e4052"/><rect x="1197" y="563" width="22" height="38" fill="#2e4052"/><rect x="1221" y="563" width="3" height="38" fill="#5a5838"/><rect x="1226" y="563" width="23" height="38" fill="#2e4052"/><rect x="1251" y="563" width="1" height="38" fill="#3e4a5c" opacity=".7"/><rect x="1254" y="563" width="13" height="38" fill="#36325e"/><rect x="1268" y="563" width="2" height="38" fill="#4a3a68"/><rect x="1272" y="563" width="12" height="38" fill="#2e4052"/><rect x="1285" y="563" width="1" height="38" fill="#3a5a44" opacity=".7"/><rect x="1287" y="563" width="12" height="38" fill="#2e4052"/><rect x="1300" y="563" width="1" height="38" fill="#3a5a44" opacity=".7"/><rect x="1302" y="563" width="8" height="38" fill="#2e4052"/><rect x="1312" y="563" width="1" height="38" fill="#4e4a2c" opacity=".7"/><rect x="1315" y="563" width="8" height="38" fill="#2e4052"/><rect x="1325" y="563" width="7" height="38" fill="#2e4052"/><rect x="1334" y="563" width="1" height="38" fill="#4a3a68" opacity=".7"/><rect x="1336" y="563" width="1" height="38" fill="#4a3a68" opacity=".7"/><rect x="1346" y="563" width="1" height="38" fill="#3e4a5c" opacity=".7"/><rect x="1348" y="563" width="3" height="38" fill="#2e4052"/><rect x="1360" y="563" width="5" height="38" fill="#2e4052"/><rect x="1367" y="563" width="1" height="38" fill="#4a3a68" opacity=".7"/><rect x="1465" y="563" width="16" height="38" fill="#502848"/><rect x="1482" y="563" width="1" height="38" fill="#593f52" opacity=".7"/><rect x="1487" y="563" width="4" height="38" fill="#544a70"/><rect x="1496" y="563" width="1" height="38" fill="#3e4a5c" opacity=".7"/><rect x="1503" y="563" width="9" height="38" fill="#56304e"/><rect x="1514" y="563" width="8" height="38" fill="#3e3866"/><rect x="1526" y="563" width="2" height="38" fill="#36543c"/><rect x="0" y="603" width="359" height="38" fill="#2d4a4c"/><rect x="361" y="603" width="55" height="38" fill="#4c4060"/><rect x="420" y="603" width="201" height="38" fill="#2d4a4c"/><rect x="623" y="603" width="53" height="38" fill="#2f4852"/><rect x="679" y="603" width="138" height="38" fill="#34504e"/><rect x="819" y="603" width="21" height="38" fill="#50406a"/><rect x="843" y="603" width="7" height="38" fill="#35386a"/><rect x="851" y="603" width="1" height="38" fill="#3a5a44" opacity=".7"/><rect x="854" y="603" width="2" height="38" fill="#4a3a68"/><rect x="872" y="603" width="21" height="38" fill="#25463e"/><rect x="895" y="603" width="1" height="38" fill="#3a5a44" opacity=".7"/><rect x="901" y="603" width="5" height="38" fill="#345040"/><rect x="908" y="603" width="1" height="38" fill="#3a5a44" opacity=".7"/><rect x="910" y="603" width="2" height="38" fill="#4a3a68"/><rect x="913" y="603" width="1" height="38" fill="#3a5a44" opacity=".7"/><rect x="915" y="603" width="1" height="38" fill="#3e4a5c" opacity=".7"/><rect x="917" y="603" width="1" height="38" fill="#58384f" opacity=".7"/><rect x="927" y="603" width="2" height="38" fill="#3e4a5c"/><rect x="931" y="603" width="1" height="38" fill="#3a5a44" opacity=".7"/><rect x="975" y="603" width="85" height="38" fill="#2c464a"/><rect x="1065" y="603" width="65" height="38" fill="#2c4a40"/><rect x="1133" y="603" width="1" height="38" fill="#3a5a44" opacity=".7"/><rect x="1135" y="603" width="28" height="38" fill="#3a5054"/><rect x="1167" y="603" width="28" height="38" fill="#3e5054"/><rect x="1197" y="603" width="22" height="38" fill="#2c484c"/><rect x="1221" y="603" width="3" height="38" fill="#3a5060"/><rect x="1226" y="603" width="23" height="38" fill="#3e5054"/><rect x="1251" y="603" width="1" height="38" fill="#58384f" opacity=".7"/><rect x="1254" y="603" width="11" height="38" fill="#36503c"/><rect x="1266" y="603" width="2" height="38" fill="#4a3a68"/><rect x="1272" y="603" width="12" height="38" fill="#3a5054"/><rect x="1285" y="603" width="1" height="38" fill="#4a3a68" opacity=".7"/><rect x="1287" y="603" width="12" height="38" fill="#3a5054"/><rect x="1300" y="603" width="1" height="38" fill="#4a3a68" opacity=".7"/><rect x="1302" y="603" width="8" height="38" fill="#30504e"/><rect x="1312" y="603" width="1" height="38" fill="#58384f" opacity=".7"/><rect x="1315" y="603" width="8" height="38" fill="#3a5054"/><rect x="1325" y="603" width="7" height="38" fill="#3a5054"/><rect x="1334" y="603" width="1" height="38" fill="#3a5a44" opacity=".7"/><rect x="1336" y="603" width="1" height="38" fill="#4a3a68" opacity=".7"/><rect x="1341" y="603" width="1" height="38" fill="#2e4a4c" opacity=".7"/><rect x="1346" y="603" width="1" height="38" fill="#3e4a5c" opacity=".7"/><rect x="1348" y="603" width="3" height="38" fill="#3a5054"/><rect x="1360" y="603" width="5" height="38" fill="#3a5054"/><rect x="1367" y="603" width="1" height="38" fill="#2e4a4c" opacity=".7"/><rect x="1465" y="603" width="15" height="38" fill="#54304e"/><rect x="1484" y="603" width="1" height="38" fill="#56304e" opacity=".7"/><rect x="1487" y="603" width="2" height="38" fill="#3e4a5c"/><rect x="1495" y="603" width="2" height="38" fill="#3a5a44"/><rect x="1503" y="603" width="7" height="38" fill="#36503c"/><rect x="1514" y="603" width="7" height="38" fill="#36503c"/><rect x="1525" y="603" width="1" height="38" fill="#4a3a68" opacity=".7"/><rect x="0" y="643" width="359" height="38" fill="#254840"/><rect x="361" y="643" width="36" height="38" fill="#573550"/><rect x="399" y="643" width="12" height="38" fill="#4e2456"/><rect x="412" y="643" width="2" height="38" fill="#3a5a44"/><rect x="420" y="643" width="201" height="38" fill="#2e4c4c"/><rect x="623" y="643" width="52" height="38" fill="#3e465c"/><rect x="676" y="643" width="1" height="38" fill="#36406a" opacity=".7"/><rect x="679" y="643" width="138" height="38" fill="#2a4a48"/><rect x="819" y="643" width="13" height="38" fill="#573550"/><rect x="834" y="643" width="4" height="38" fill="#4e2456"/><rect x="839" y="643" width="1" height="38" fill="#3a5a44" opacity=".7"/><rect x="843" y="643" width="7" height="38" fill="#2e4a44"/><rect x="853" y="643" width="1" height="38" fill="#3a5a44" opacity=".7"/><rect x="872" y="643" width="21" height="38" fill="#36523e"/><rect x="901" y="643" width="5" height="38" fill="#3a5040"/><rect x="910" y="643" width="2" height="38" fill="#3a5a44"/><rect x="913" y="643" width="1" height="38" fill="#3a5a44" opacity=".7"/><rect x="917" y="643" width="2" height="38" fill="#3a5a44"/><rect x="921" y="643" width="1" height="38" fill="#3a5a44" opacity=".7"/><rect x="924" y="643" width="1" height="38" fill="#3a5a44" opacity=".7"/><rect x="927" y="643" width="1" height="38" fill="#3a5a44" opacity=".7"/><rect x="930" y="643" width="2" height="38" fill="#3a5a44"/><rect x="975" y="643" width="85" height="38" fill="#30484c"/><rect x="1061" y="643" width="1" height="38" fill="#4a3a68" opacity=".7"/><rect x="1065" y="643" width="65" height="38" fill="#384658"/><rect x="1135" y="643" width="28" height="38" fill="#2e484e"/><rect x="1164" y="643" width="1" height="38" fill="#4a3a68" opacity=".7"/><rect x="1167" y="643" width="28" height="38" fill="#445258"/><rect x="1197" y="643" width="22" height="38" fill="#324c50"/><rect x="1221" y="643" width="3" height="38" fill="#46546a"/><rect x="1226" y="643" width="23" height="38" fill="#445258"/><rect x="1252" y="643" width="1" height="38" fill="#58384f" opacity=".7"/><rect x="1254" y="643" width="2" height="38" fill="#4a3a68"/><rect x="1272" y="643" width="12" height="38" fill="#2e484e"/><rect x="1285" y="643" width="1" height="38" fill="#4a3a68" opacity=".7"/><rect x="1287" y="643" width="12" height="38" fill="#445258"/><rect x="1302" y="643" width="8" height="38" fill="#2a4848"/><rect x="1313" y="643" width="1" height="38" fill="#3a5a44" opacity=".7"/><rect x="1315" y="643" width="8" height="38" fill="#445258"/><rect x="1325" y="643" width="7" height="38" fill="#445258"/><rect x="1336" y="643" width="1" height="38" fill="#3a5a44" opacity=".7"/><rect x="1341" y="643" width="1" height="38" fill="#3e4a5c" opacity=".7"/><rect x="1346" y="643" width="1" height="38" fill="#4e4a2c" opacity=".7"/><rect x="1348" y="643" width="3" height="38" fill="#2e4a4c"/><rect x="1360" y="643" width="5" height="38" fill="#445258"/><rect x="1367" y="643" width="1" height="38" fill="#2e4a4c" opacity=".7"/><rect x="1465" y="643" width="8" height="38" fill="#3a5444"/><rect x="1475" y="643" width="4" height="38" fill="#3a5a44"/><rect x="1486" y="643" width="1" height="38" fill="#3a5a44" opacity=".7"/><rect x="1488" y="643" width="1" height="38" fill="#4e4a2c" opacity=".7"/><rect x="1495" y="643" width="2" height="38" fill="#3e4a5c"/><rect x="1503" y="643" width="7" height="38" fill="#3a5444"/><rect x="0" y="683" width="354" height="38" fill="#484664"/><rect x="355" y="683" width="1" height="38" fill="#4a3a68" opacity=".7"/><rect x="357" y="683" width="1" height="38" fill="#3e4a5c" opacity=".7"/><rect x="361" y="683" width="28" height="38" fill="#593f52"/><rect x="390" y="683" width="1" height="38" fill="#58384f" opacity=".7"/><rect x="392" y="683" width="2" height="38" fill="#4a3a68"/><rect x="396" y="683" width="2" height="38" fill="#4a3a68"/><rect x="399" y="683" width="12" height="38" fill="#3e3a66"/><rect x="420" y="683" width="198" height="38" fill="#484664"/><rect x="623" y="683" width="3" height="38" fill="#3a5a44"/><rect x="679" y="683" width="136" height="38" fill="#484664"/><rect x="819" y="683" width="10" height="38" fill="#604058"/><rect x="834" y="683" width="4" height="38" fill="#3e3a66"/><rect x="843" y="683" width="6" height="38" fill="#3a5048"/><rect x="851" y="683" width="1" height="38" fill="#3a5a44" opacity=".7"/><rect x="853" y="683" width="1" height="38" fill="#3a5a44" opacity=".7"/><rect x="872" y="683" width="19" height="38" fill="#385052"/><rect x="901" y="683" width="2" height="38" fill="#3a5a44"/><rect x="904" y="683" width="1" height="38" fill="#3a5a44" opacity=".7"/><rect x="908" y="683" width="1" height="38" fill="#4a3a68" opacity=".7"/><rect x="910" y="683" width="2" height="38" fill="#58384f"/><rect x="913" y="683" width="1" height="38" fill="#3a5a44" opacity=".7"/><rect x="917" y="683" width="2" height="38" fill="#3a5a44"/><rect x="921" y="683" width="1" height="38" fill="#4a3a68" opacity=".7"/><rect x="924" y="683" width="1" height="38" fill="#3a5a44" opacity=".7"/><rect x="927" y="683" width="1" height="38" fill="#3a5a44" opacity=".7"/><rect x="930" y="683" width="1" height="38" fill="#3a5a44" opacity=".7"/><rect x="975" y="683" width="84" height="38" fill="#4c4660"/><rect x="1060" y="683" width="1" height="38" fill="#4a3a68" opacity=".7"/><rect x="1065" y="683" width="65" height="38" fill="#3e4a58"/><rect x="1135" y="683" width="27" height="38" fill="#2a4250"/><rect x="1163" y="683" width="1" height="38" fill="#3a5a44" opacity=".7"/><rect x="1167" y="683" width="27" height="38" fill="#4c4660"/><rect x="1195" y="683" width="1" height="38" fill="#4a3a68" opacity=".7"/><rect x="1197" y="683" width="22" height="38" fill="#4c4660"/><rect x="1226" y="683" width="22" height="38" fill="#4c4660"/><rect x="1250" y="683" width="1" height="38" fill="#3a5a44" opacity=".7"/><rect x="1254" y="683" width="1" height="38" fill="#3a5a44" opacity=".7"/><rect x="1272" y="683" width="12" height="38" fill="#2a4250"/><rect x="1287" y="683" width="11" height="38" fill="#4c4660"/><rect x="1302" y="683" width="8" height="38" fill="#4c4660"/><rect x="1311" y="683" width="1" height="38" fill="#3a5a44" opacity=".7"/><rect x="1315" y="683" width="8" height="38" fill="#4c4660"/><rect x="1325" y="683" width="6" height="38" fill="#4c4660"/><rect x="1336" y="683" width="1" height="38" fill="#3a5a44" opacity=".7"/><rect x="1341" y="683" width="1" height="38" fill="#3e4a5c" opacity=".7"/><rect x="1346" y="683" width="1" height="38" fill="#4a3a68" opacity=".7"/><rect x="1348" y="683" width="3" height="38" fill="#4c4660"/><rect x="1360" y="683" width="5" height="38" fill="#4c4660"/><rect x="1367" y="683" width="1" height="38" fill="#4a3a68" opacity=".7"/><rect x="1465" y="683" width="4" height="38" fill="#5a3858"/><rect x="1470" y="683" width="1" height="38" fill="#4a3a68" opacity=".7"/><rect x="1475" y="683" width="3" height="38" fill="#3a5a44"/><rect x="1489" y="683" width="2" height="38" fill="#4a3a68"/><rect x="1495" y="683" width="2" height="38" fill="#3e4a5c"/><rect x="1503" y="683" width="5" height="38" fill="#3a5a44"/><rect x="1509" y="683" width="1" height="38" fill="#4a3a68" opacity=".7"/><rect x="0" y="723" width="321" height="38" fill="#3e3e68"/><rect x="323" y="723" width="30" height="38" fill="#47476a"/><rect x="355" y="723" width="2" height="38" fill="#3a5a44"/><rect x="358" y="723" width="1" height="38" fill="#3a5a44" opacity=".7"/><rect x="360" y="723" width="1" height="38" fill="#4a3a68" opacity=".7"/><rect x="364" y="723" width="3" height="38" fill="#3a5a44"/><rect x="390" y="723" width="1" height="38" fill="#3a5a44" opacity=".7"/><rect x="398" y="723" width="1" height="38" fill="#3a5a44" opacity=".7"/><rect x="420" y="723" width="194" height="38" fill="#3e3e68"/><rect x="615" y="723" width="1" height="38" fill="#4a3a68" opacity=".7"/><rect x="618" y="723" width="1" height="38" fill="#3a5a44" opacity=".7"/><rect x="679" y="723" width="124" height="38" fill="#3e3e68"/><rect x="805" y="723" width="9" height="38" fill="#45426a"/><rect x="818" y="723" width="2" height="38" fill="#3a5a44"/><rect x="830" y="723" width="1" height="38" fill="#3a5a44" opacity=".7"/><rect x="843" y="723" width="5" height="38" fill="#3a5054"/><rect x="853" y="723" width="1" height="38" fill="#3a5a44" opacity=".7"/><rect x="872" y="723" width="19" height="38" fill="#25463a"/><rect x="902" y="723" width="1" height="38" fill="#3a5a44" opacity=".7"/><rect x="910" y="723" width="2" height="38" fill="#3a5a44"/><rect x="913" y="723" width="1" height="38" fill="#4a3a68" opacity=".7"/><rect x="917" y="723" width="1" height="38" fill="#3a5a44" opacity=".7"/><rect x="921" y="723" width="1" height="38" fill="#4a3a68" opacity=".7"/><rect x="924" y="723" width="1" height="38" fill="#3a5a44" opacity=".7"/><rect x="927" y="723" width="1" height="38" fill="#3a5a44" opacity=".7"/><rect x="975" y="723" width="83" height="38" fill="#3e3a60"/><rect x="1059" y="723" width="1" height="38" fill="#4a3a68" opacity=".7"/><rect x="1065" y="723" width="65" height="38" fill="#2c4a3c"/><rect x="1135" y="723" width="27" height="38" fill="#2e2e60"/><rect x="1167" y="723" width="26" height="38" fill="#403e62"/><rect x="1194" y="723" width="1" height="38" fill="#4a3a68" opacity=".7"/><rect x="1197" y="723" width="21" height="38" fill="#403e62"/><rect x="1219" y="723" width="1" height="38" fill="#4a3a68" opacity=".7"/><rect x="1226" y="723" width="21" height="38" fill="#403e62"/><rect x="1248" y="723" width="1" height="38" fill="#4a3a68" opacity=".7"/><rect x="1254" y="723" width="1" height="38" fill="#3a5a44" opacity=".7"/><rect x="1257" y="723" width="1" height="38" fill="#4a3a68" opacity=".7"/><rect x="1272" y="723" width="12" height="38" fill="#2e2e60"/><rect x="1287" y="723" width="10" height="38" fill="#403e62"/><rect x="1298" y="723" width="1" height="38" fill="#4a3a68" opacity=".7"/><rect x="1302" y="723" width="6" height="38" fill="#48466a"/><rect x="1315" y="723" width="8" height="38" fill="#403e62"/><rect x="1325" y="723" width="6" height="38" fill="#403e62"/><rect x="1341" y="723" width="1" height="38" fill="#4a3a68" opacity=".7"/><rect x="1346" y="723" width="1" height="38" fill="#58384f" opacity=".7"/><rect x="1348" y="723" width="3" height="38" fill="#48466a"/><rect x="1358" y="723" width="1" height="38" fill="#48466a" opacity=".7"/><rect x="1360" y="723" width="5" height="38" fill="#48466a"/><rect x="1367" y="723" width="1" height="38" fill="#4a3a68" opacity=".7"/><rect x="1465" y="723" width="3" height="38" fill="#4e4a68"/><rect x="1469" y="723" width="1" height="38" fill="#58384f" opacity=".7"/><rect x="1475" y="723" width="1" height="38" fill="#58384f" opacity=".7"/><rect x="1487" y="723" width="1" height="38" fill="#4a3a68" opacity=".7"/><rect x="1490" y="723" width="1" height="38" fill="#3a5a44" opacity=".7"/><rect x="1495" y="723" width="1" height="38" fill="#3e4a5c" opacity=".7"/><rect x="1502" y="723" width="1" height="38" fill="#4a3a68" opacity=".7"/><rect x="0" y="763" width="174" height="38" fill="#2c5040"/><rect x="176" y="763" width="133" height="38" fill="#4d4c30"/><rect x="311" y="763" width="5" height="38" fill="#3a5a44"/><rect x="318" y="763" width="2" height="38" fill="#3a5a44"/><rect x="323" y="763" width="23" height="38" fill="#4f4a2c"/><rect x="348" y="763" width="3" height="38" fill="#3a5a44"/><rect x="352" y="763" width="1" height="38" fill="#3a5a44" opacity=".7"/><rect x="420" y="763" width="86" height="38" fill="#50302a"/><rect x="508" y="763" width="60" height="38" fill="#38523f"/><rect x="570" y="763" width="39" height="38" fill="#345238"/><rect x="610" y="763" width="2" height="38" fill="#3a5a44"/><rect x="617" y="763" width="1" height="38" fill="#50342a" opacity=".7"/><rect x="679" y="763" width="76" height="38" fill="#2e5040"/><rect x="757" y="763" width="40" height="38" fill="#4a4628"/><rect x="799" y="763" width="2" height="38" fill="#3a5a44"/><rect x="805" y="763" width="6" height="38" fill="#4a4628"/><rect x="813" y="763" width="1" height="38" fill="#3a5a44" opacity=".7"/><rect x="843" y="763" width="5" height="38" fill="#2e5040"/><rect x="852" y="763" width="1" height="38" fill="#4a3a68" opacity=".7"/><rect x="853" y="763" width="1" height="38" fill="#3a5a44" opacity=".7"/><rect x="872" y="763" width="16" height="38" fill="#46345e"/><rect x="909" y="763" width="1" height="38" fill="#4a3a68" opacity=".7"/><rect x="917" y="763" width="1" height="38" fill="#4a3a68" opacity=".7"/><rect x="924" y="763" width="1" height="38" fill="#4a3a68" opacity=".7"/><rect x="975" y="763" width="46" height="38" fill="#384858"/><rect x="1023" y="763" width="21" height="38" fill="#3e5a44"/><rect x="1046" y="763" width="10" height="38" fill="#36503c"/><rect x="1059" y="763" width="1" height="38" fill="#4a3a68" opacity=".7"/><rect x="1065" y="763" width="63" height="38" fill="#20443a"/><rect x="1135" y="763" width="23" height="38" fill="#36503c"/><rect x="1160" y="763" width="1" height="38" fill="#4a3a68" opacity=".7"/><rect x="1167" y="763" width="8" height="38" fill="#3e5a48"/><rect x="1177" y="763" width="8" height="38" fill="#38523e"/><rect x="1187" y="763" width="5" height="38" fill="#5a362c"/><rect x="1193" y="763" width="1" height="38" fill="#3a5a44" opacity=".7"/><rect x="1197" y="763" width="8" height="38" fill="#3e5a48"/><rect x="1207" y="763" width="6" height="38" fill="#4e4c2c"/><rect x="1215" y="763" width="1" height="38" fill="#3a5a44" opacity=".7"/><rect x="1218" y="763" width="1" height="38" fill="#3a5a44" opacity=".7"/><rect x="1226" y="763" width="11" height="38" fill="#263c52"/><rect x="1239" y="763" width="6" height="38" fill="#3a5444"/><rect x="1248" y="763" width="1" height="38" fill="#3e4a5c" opacity=".7"/><rect x="1254" y="763" width="1" height="38" fill="#4a3a68" opacity=".7"/><rect x="1257" y="763" width="1" height="38" fill="#3a5a44" opacity=".7"/><rect x="1272" y="763" width="10" height="38" fill="#36503c"/><rect x="1283" y="763" width="1" height="38" fill="#4a3a68" opacity=".7"/><rect x="1287" y="763" width="7" height="38" fill="#3e5060"/><rect x="1295" y="763" width="1" height="38" fill="#3a5a44" opacity=".7"/><rect x="1298" y="763" width="1" height="38" fill="#3a5a44" opacity=".7"/><rect x="1302" y="763" width="5" height="38" fill="#4e4428"/><rect x="1308" y="763" width="1" height="38" fill="#3a5a44" opacity=".7"/><rect x="1315" y="763" width="1" height="38" fill="#3a5a44" opacity=".7"/><rect x="1318" y="763" width="1" height="38" fill="#3a5a44" opacity=".7"/><rect x="1323" y="763" width="1" height="38" fill="#3a5a44" opacity=".7"/><rect x="1325" y="763" width="3" height="38" fill="#3e5060"/><rect x="1329" y="763" width="1" height="38" fill="#3a5a44" opacity=".7"/><rect x="1341" y="763" width="1" height="38" fill="#58384f" opacity=".7"/><rect x="1346" y="763" width="1" height="38" fill="#58384f" opacity=".7"/><rect x="1349" y="763" width="1" height="38" fill="#3a5a44" opacity=".7"/><rect x="1358" y="763" width="1" height="38" fill="#4e4a2c" opacity=".7"/><rect x="1361" y="763" width="3" height="38" fill="#50342a"/><rect x="1367" y="763" width="1" height="38" fill="#4e4a2c" opacity=".7"/><rect x="1465" y="763" width="3" height="38" fill="#5a3858"/><rect x="1475" y="763" width="1" height="38" fill="#4a3a68" opacity=".7"/><rect x="1490" y="763" width="1" height="38" fill="#4a3a68" opacity=".7"/><rect x="1495" y="763" width="1" height="38" fill="#3e4a5c" opacity=".7"/><rect x="0" y="803" width="142" height="38" fill="#2e4e48"/><rect x="144" y="803" width="14" height="38" fill="#3e3868"/><rect x="176" y="803" width="133" height="38" fill="#4e405e"/><rect x="311" y="803" width="2" height="38" fill="#4a3a68"/><rect x="314" y="803" width="1" height="38" fill="#4a3a68" opacity=".7"/><rect x="317" y="803" width="2" height="38" fill="#4a3a68"/><rect x="323" y="803" width="23" height="38" fill="#52405e"/><rect x="347" y="803" width="2" height="38" fill="#3a5a44"/><rect x="350" y="803" width="2" height="38" fill="#4a3a68"/><rect x="420" y="803" width="86" height="38" fill="#2e4450"/><rect x="508" y="803" width="55" height="38" fill="#34523c"/><rect x="564" y="803" width="1" height="38" fill="#3a5a44" opacity=".7"/><rect x="570" y="803" width="18" height="38" fill="#36503e"/><rect x="590" y="803" width="6" height="38" fill="#443a6a"/><rect x="617" y="803" width="1" height="38" fill="#4a3a68" opacity=".7"/><rect x="679" y="803" width="61" height="38" fill="#34523c"/><rect x="742" y="803" width="5" height="38" fill="#4a3a68"/><rect x="757" y="803" width="40" height="38" fill="#50405e"/><rect x="799" y="803" width="1" height="38" fill="#4a3a68" opacity=".7"/><rect x="805" y="803" width="6" height="38" fill="#50405e"/><rect x="812" y="803" width="2" height="38" fill="#3e4a5c"/><rect x="843" y="803" width="5" height="38" fill="#46345e"/><rect x="854" y="803" width="1" height="38" fill="#4a3a68" opacity=".7"/><rect x="872" y="803" width="5" height="38" fill="#46345e"/><rect x="878" y="803" width="1" height="38" fill="#4a3a68" opacity=".7"/><rect x="882" y="803" width="3" height="38" fill="#3e4a5c"/><rect x="975" y="803" width="46" height="38" fill="#34325e"/><rect x="1023" y="803" width="19" height="38" fill="#36503c"/><rect x="1046" y="803" width="5" height="38" fill="#3a5444"/><rect x="1052" y="803" width="1" height="38" fill="#4a3a68" opacity=".7"/><rect x="1059" y="803" width="1" height="38" fill="#3e4a5c" opacity=".7"/><rect x="1065" y="803" width="63" height="38" fill="#1f443c"/><rect x="1131" y="803" width="1" height="38" fill="#4a3a68" opacity=".7"/><rect x="1135" y="803" width="3" height="38" fill="#4a4068"/><rect x="1140" y="803" width="1" height="38" fill="#4a3a68" opacity=".7"/><rect x="1144" y="803" width="1" height="38" fill="#3a5a44" opacity=".7"/><rect x="1167" y="803" width="7" height="38" fill="#3a5440"/><rect x="1177" y="803" width="6" height="38" fill="#3a5444"/><rect x="1187" y="803" width="5" height="38" fill="#30485a"/><rect x="1193" y="803" width="1" height="38" fill="#3a5a44" opacity=".7"/><rect x="1197" y="803" width="7" height="38" fill="#36503c"/><rect x="1205" y="803" width="1" height="38" fill="#4a3a68" opacity=".7"/><rect x="1207" y="803" width="6" height="38" fill="#30485a"/><rect x="1216" y="803" width="1" height="38" fill="#4a3a68" opacity=".7"/><rect x="1219" y="803" width="1" height="38" fill="#3a5a44" opacity=".7"/><rect x="1226" y="803" width="8" height="38" fill="#58304e"/><rect x="1236" y="803" width="1" height="38" fill="#4a3a68" opacity=".7"/><rect x="1239" y="803" width="5" height="38" fill="#3a5444"/><rect x="1248" y="803" width="1" height="38" fill="#58384f" opacity=".7"/><rect x="1253" y="803" width="1" height="38" fill="#3a5a44" opacity=".7"/><rect x="1274" y="803" width="1" height="38" fill="#4a3a68" opacity=".7"/><rect x="1276" y="803" width="1" height="38" fill="#3a5a44" opacity=".7"/><rect x="1287" y="803" width="6" height="38" fill="#34325e"/><rect x="1295" y="803" width="1" height="38" fill="#3a5a44" opacity=".7"/><rect x="1298" y="803" width="1" height="38" fill="#3a5a44" opacity=".7"/><rect x="1302" y="803" width="5" height="38" fill="#5a3e5e"/><rect x="1308" y="803" width="1" height="38" fill="#3a5a44" opacity=".7"/><rect x="1315" y="803" width="1" height="38" fill="#3a5a44" opacity=".7"/><rect x="1318" y="803" width="1" height="38" fill="#3a5a44" opacity=".7"/><rect x="1320" y="803" width="1" height="38" fill="#4e4a2c" opacity=".7"/><rect x="1325" y="803" width="3" height="38" fill="#34325e"/><rect x="1330" y="803" width="1" height="38" fill="#3a5a44" opacity=".7"/><rect x="1343" y="803" width="1" height="38" fill="#4a3a68" opacity=".7"/><rect x="1347" y="803" width="1" height="38" fill="#3a5a44" opacity=".7"/><rect x="1349" y="803" width="1" height="38" fill="#58384f" opacity=".7"/><rect x="1358" y="803" width="1" height="38" fill="#4a3a68" opacity=".7"/><rect x="1361" y="803" width="3" height="38" fill="#58384f"/><rect x="1367" y="803" width="1" height="38" fill="#4a3a68" opacity=".7"/><rect x="1464" y="803" width="1" height="38" fill="#3a5a44" opacity=".7"/><rect x="1495" y="803" width="1" height="38" fill="#3a5a44" opacity=".7"/><rect x="0" y="843" width="135" height="38" fill="#4e4b32"/><rect x="136" y="843" width="1" height="38" fill="#3a5a44" opacity=".7"/><rect x="176" y="843" width="97" height="38" fill="#56344e"/><rect x="275" y="843" width="21" height="38" fill="#4e2058"/><rect x="298" y="843" width="5" height="38" fill="#3a5040"/><rect x="305" y="843" width="2" height="38" fill="#3a5a44"/><rect x="309" y="843" width="1" height="38" fill="#4a3a68" opacity=".7"/><rect x="312" y="843" width="2" height="38" fill="#3a5a44"/><rect x="323" y="843" width="16" height="38" fill="#59364f"/><rect x="341" y="843" width="2" height="38" fill="#4a3a68"/><rect x="345" y="843" width="1" height="38" fill="#3a5a44" opacity=".7"/><rect x="348" y="843" width="2" height="38" fill="#4e4a2c"/><rect x="420" y="843" width="82" height="38" fill="#3e4860"/><rect x="503" y="843" width="1" height="38" fill="#3e4a5c" opacity=".7"/><rect x="508" y="843" width="28" height="38" fill="#4f3028"/><rect x="539" y="843" width="11" height="38" fill="#45386a"/><rect x="551" y="843" width="1" height="38" fill="#3a5a44" opacity=".7"/><rect x="570" y="843" width="14" height="38" fill="#50332a"/><rect x="615" y="843" width="1" height="38" fill="#50342a" opacity=".7"/><rect x="617" y="843" width="1" height="38" fill="#3a5a44" opacity=".7"/><rect x="679" y="843" width="57" height="38" fill="#454020"/><rect x="757" y="843" width="27" height="38" fill="#58355a"/><rect x="786" y="843" width="6" height="38" fill="#4e2058"/><rect x="794" y="843" width="2" height="38" fill="#3a5a44"/><rect x="797" y="843" width="1" height="38" fill="#3a5a44" opacity=".7"/><rect x="805" y="843" width="2" height="38" fill="#58384f"/><rect x="811" y="843" width="1" height="38" fill="#4e4a2c" opacity=".7"/><rect x="843" y="843" width="1" height="38" fill="#4a3a68" opacity=".7"/><rect x="846" y="843" width="1" height="38" fill="#4a3a68" opacity=".7"/><rect x="873" y="843" width="3" height="38" fill="#4a3a68"/><rect x="878" y="843" width="2" height="38" fill="#58384f"/><rect x="882" y="843" width="3" height="38" fill="#4a3a68"/><rect x="975" y="843" width="42" height="38" fill="#36503c"/><rect x="1019" y="843" width="1" height="38" fill="#3a5a44" opacity=".7"/><rect x="1023" y="843" width="17" height="38" fill="#363260"/><rect x="1041" y="843" width="1" height="38" fill="#4a3a68" opacity=".7"/><rect x="1046" y="843" width="3" height="38" fill="#4a3a68"/><rect x="1052" y="843" width="1" height="38" fill="#4a3a68" opacity=".7"/><rect x="1059" y="843" width="1" height="38" fill="#3a5a44" opacity=".7"/><rect x="1065" y="843" width="63" height="38" fill="#424e5c"/><rect x="1144" y="843" width="1" height="38" fill="#3a5a44" opacity=".7"/><rect x="1167" y="843" width="6" height="38" fill="#50382c"/><rect x="1177" y="843" width="5" height="38" fill="#50342a"/><rect x="1187" y="843" width="4" height="38" fill="#58384f"/><rect x="1193" y="843" width="2" height="38" fill="#4e4a2c"/><rect x="1197" y="843" width="4" height="38" fill="#4e4a2c"/><rect x="1207" y="843" width="6" height="38" fill="#3e4a62"/><rect x="1214" y="843" width="2" height="38" fill="#3a5a44"/><rect x="1219" y="843" width="1" height="38" fill="#4e4a2c" opacity=".7"/><rect x="1226" y="843" width="5" height="38" fill="#58355a"/><rect x="1233" y="843" width="2" height="38" fill="#3a5a44"/><rect x="1237" y="843" width="7" height="38" fill="#2e4460"/><rect x="1246" y="843" width="3" height="38" fill="#4a3a68"/><rect x="1253" y="843" width="1" height="38" fill="#3a5a44" opacity=".7"/><rect x="1276" y="843" width="1" height="38" fill="#3a5a44" opacity=".7"/><rect x="1287" y="843" width="5" height="38" fill="#36523e"/><rect x="1293" y="843" width="2" height="38" fill="#3a5a44"/><rect x="1297" y="843" width="1" height="38" fill="#3a5a44" opacity=".7"/><rect x="1302" y="843" width="3" height="38" fill="#3e4a5c"/><rect x="1306" y="843" width="4" height="38" fill="#3a5a44"/><rect x="1314" y="843" width="2" height="38" fill="#3a5a44"/><rect x="1318" y="843" width="2" height="38" fill="#4a3a68"/><rect x="1325" y="843" width="2" height="38" fill="#4e4a2c"/><rect x="1328" y="843" width="2" height="38" fill="#3a5a44"/><rect x="1342" y="843" width="2" height="38" fill="#4a3a68"/><rect x="1346" y="843" width="1" height="38" fill="#4a3a68" opacity=".7"/><rect x="1348" y="843" width="2" height="38" fill="#4a3a68"/><rect x="1358" y="843" width="1" height="38" fill="#3a5a44" opacity=".7"/><rect x="1361" y="843" width="3" height="38" fill="#58384f"/><rect x="1366" y="843" width="1" height="38" fill="#4a3a68" opacity=".7"/><rect x="1465" y="843" width="1" height="38" fill="#3a5a44" opacity=".7"/><rect x="1474" y="843" width="1" height="38" fill="#3a5a44" opacity=".7"/><rect x="1495" y="843" width="1" height="38" fill="#3e4a5c" opacity=".7"/><rect x="0" y="883" width="135" height="38" fill="#504060"/><rect x="176" y="883" width="62" height="38" fill="#502c4c"/><rect x="240" y="883" width="32" height="38" fill="#593f52"/><rect x="275" y="883" width="20" height="38" fill="#3e3660"/><rect x="304" y="883" width="1" height="38" fill="#4a3a68" opacity=".7"/><rect x="314" y="883" width="1" height="38" fill="#4a3a68" opacity=".7"/><rect x="323" y="883" width="10" height="38" fill="#58304e"/><rect x="335" y="883" width="3" height="38" fill="#593f52"/><rect x="341" y="883" width="2" height="38" fill="#4a3a68"/><rect x="345" y="883" width="1" height="38" fill="#4a3a68" opacity=".7"/><rect x="348" y="883" width="1" height="38" fill="#4a3a68" opacity=".7"/><rect x="420" y="883" width="63" height="38" fill="#34523c"/><rect x="508" y="883" width="28" height="38" fill="#30474f"/><rect x="551" y="883" width="1" height="38" fill="#50342a" opacity=".7"/><rect x="570" y="883" width="14" height="38" fill="#30474f"/><rect x="615" y="883" width="1" height="38" fill="#3a5a44" opacity=".7"/><rect x="617" y="883" width="1" height="38" fill="#3a5a44" opacity=".7"/><rect x="679" y="883" width="57" height="38" fill="#504060"/><rect x="737" y="883" width="1" height="38" fill="#4e4a2c" opacity=".7"/><rect x="757" y="883" width="16" height="38" fill="#502c4c"/><rect x="775" y="883" width="9" height="38" fill="#593f52"/><rect x="786" y="883" width="6" height="38" fill="#3e3660"/><rect x="794" y="883" width="1" height="38" fill="#4a3a68" opacity=".7"/><rect x="797" y="883" width="1" height="38" fill="#4a3a68" opacity=".7"/><rect x="805" y="883" width="1" height="38" fill="#58384f" opacity=".7"/><rect x="812" y="883" width="1" height="38" fill="#3a5a44" opacity=".7"/><rect x="842" y="883" width="3" height="38" fill="#4a3a68"/><rect x="871" y="883" width="2" height="38" fill="#58384f"/><rect x="878" y="883" width="2" height="38" fill="#4a3a68"/><rect x="883" y="883" width="2" height="38" fill="#4a3a68"/><rect x="975" y="883" width="12" height="38" fill="#44365c"/><rect x="1018" y="883" width="1" height="38" fill="#3e4a5c" opacity=".7"/><rect x="1023" y="883" width="15" height="38" fill="#35475a"/><rect x="1040" y="883" width="1" height="38" fill="#4a3a68" opacity=".7"/><rect x="1046" y="883" width="3" height="38" fill="#35475a"/><rect x="1052" y="883" width="1" height="38" fill="#4a3a68" opacity=".7"/><rect x="1065" y="883" width="63" height="38" fill="#3a4858"/><rect x="1167" y="883" width="6" height="38" fill="#30474f"/><rect x="1177" y="883" width="5" height="38" fill="#30474f"/><rect x="1187" y="883" width="4" height="38" fill="#36503c"/><rect x="1193" y="883" width="2" height="38" fill="#3e4a5c"/><rect x="1197" y="883" width="4" height="38" fill="#3a4a5e"/><rect x="1207" y="883" width="4" height="38" fill="#3a5a44"/><rect x="1214" y="883" width="1" height="38" fill="#3a5a44" opacity=".7"/><rect x="1219" y="883" width="1" height="38" fill="#3a5a44" opacity=".7"/><rect x="1226" y="883" width="4" height="38" fill="#3a5a44"/><rect x="1232" y="883" width="2" height="38" fill="#3a5a44"/><rect x="1238" y="883" width="4" height="38" fill="#58384f"/><rect x="1244" y="883" width="1" height="38" fill="#4a3a68" opacity=".7"/><rect x="1246" y="883" width="3" height="38" fill="#4a3a68"/><rect x="1253" y="883" width="1" height="38" fill="#3a5a44" opacity=".7"/><rect x="1287" y="883" width="1" height="38" fill="#4a3a68" opacity=".7"/><rect x="1289" y="883" width="1" height="38" fill="#4a3a68" opacity=".7"/><rect x="1298" y="883" width="1" height="38" fill="#3a5a44" opacity=".7"/><rect x="1302" y="883" width="2" height="38" fill="#3a5a44"/><rect x="1306" y="883" width="1" height="38" fill="#56304e" opacity=".7"/><rect x="1314" y="883" width="1" height="38" fill="#4a3a68" opacity=".7"/><rect x="1318" y="883" width="2" height="38" fill="#4a3a68"/><rect x="1326" y="883" width="1" height="38" fill="#3a5a44" opacity=".7"/><rect x="1342" y="883" width="2" height="38" fill="#4a3a68"/><rect x="1346" y="883" width="1" height="38" fill="#4a3a68" opacity=".7"/><rect x="1348" y="883" width="2" height="38" fill="#4a3a68"/><rect x="1358" y="883" width="1" height="38" fill="#3a5a44" opacity=".7"/><rect x="1361" y="883" width="3" height="38" fill="#3a5a44"/><rect x="1366" y="883" width="1" height="38" fill="#4a3a68" opacity=".7"/><rect x="1474" y="883" width="1" height="38" fill="#4a3a68" opacity=".7"/><rect x="1495" y="883" width="1" height="38" fill="#3e4a5c" opacity=".7"/><rect x="0" y="923" width="105" height="38" fill="#50304e"/><rect x="107" y="923" width="18" height="38" fill="#4e2058"/><rect x="127" y="923" width="3" height="38" fill="#3a5a44"/><rect x="132" y="923" width="1" height="38" fill="#4a3a68" opacity=".7"/><rect x="136" y="923" width="1" height="38" fill="#4a3a68" opacity=".7"/><rect x="176" y="923" width="60" height="38" fill="#34523c"/><rect x="240" y="923" width="18" height="38" fill="#2e5040"/><rect x="259" y="923" width="2" height="38" fill="#3a5a44"/><rect x="275" y="923" width="16" height="38" fill="#36523e"/><rect x="304" y="923" width="1" height="38" fill="#3a5a44" opacity=".7"/><rect x="323" y="923" width="10" height="38" fill="#36523e"/><rect x="335" y="923" width="2" height="38" fill="#3a5a44"/><rect x="340" y="923" width="1" height="38" fill="#3a5a44" opacity=".7"/><rect x="348" y="923" width="1" height="38" fill="#4a3a68" opacity=".7"/><rect x="420" y="923" width="18" height="38" fill="#43365a"/><rect x="503" y="923" width="1" height="38" fill="#3e4a5c" opacity=".7"/><rect x="508" y="923" width="27" height="38" fill="#404a62"/><rect x="551" y="923" width="1" height="38" fill="#4a3a68" opacity=".7"/><rect x="570" y="923" width="13" height="38" fill="#404a62"/><rect x="584" y="923" width="1" height="38" fill="#4a3a68" opacity=".7"/><rect x="615" y="923" width="1" height="38" fill="#4a3a68" opacity=".7"/><rect x="679" y="923" width="41" height="38" fill="#56344e"/><rect x="722" y="923" width="9" height="38" fill="#4e2058"/><rect x="737" y="923" width="1" height="38" fill="#4a3a68" opacity=".7"/><rect x="757" y="923" width="15" height="38" fill="#36523e"/><rect x="775" y="923" width="5" height="38" fill="#3a5a44"/><rect x="781" y="923" width="1" height="38" fill="#3a5a44" opacity=".7"/><rect x="786" y="923" width="5" height="38" fill="#3a5a44"/><rect x="793" y="923" width="1" height="38" fill="#3a5a44" opacity=".7"/><rect x="805" y="923" width="1" height="38" fill="#4a3a68" opacity=".7"/><rect x="808" y="923" width="1" height="38" fill="#3a5a44" opacity=".7"/><rect x="811" y="923" width="1" height="38" fill="#3a5a44" opacity=".7"/><rect x="842" y="923" width="1" height="38" fill="#58384f" opacity=".7"/><rect x="873" y="923" width="1" height="38" fill="#3a5a44" opacity=".7"/><rect x="878" y="923" width="3" height="38" fill="#4a3a68"/><rect x="884" y="923" width="1" height="38" fill="#4a3a68" opacity=".7"/><rect x="1023" y="923" width="15" height="38" fill="#363260"/><rect x="1040" y="923" width="1" height="38" fill="#4a3a68" opacity=".7"/><rect x="1046" y="923" width="3" height="38" fill="#3e3868"/><rect x="1065" y="923" width="9" height="38" fill="#454a68"/><rect x="1076" y="923" width="1" height="38" fill="#4e4a2c" opacity=".7"/><rect x="1079" y="923" width="1" height="38" fill="#58384f" opacity=".7"/><rect x="1087" y="923" width="2" height="38" fill="#58384f"/><rect x="1090" y="923" width="1" height="38" fill="#3a5a44" opacity=".7"/><rect x="1092" y="923" width="2" height="38" fill="#58384f"/><rect x="1095" y="923" width="1" height="38" fill="#3a5a44" opacity=".7"/><rect x="1167" y="923" width="6" height="38" fill="#5a3858"/><rect x="1177" y="923" width="4" height="38" fill="#58384f"/><rect x="1182" y="923" width="2" height="38" fill="#58384f"/><rect x="1186" y="923" width="1" height="38" fill="#4a3a68" opacity=".7"/><rect x="1194" y="923" width="1" height="38" fill="#4a3a68" opacity=".7"/><rect x="1197" y="923" width="4" height="38" fill="#3a4a62"/><rect x="1214" y="923" width="1" height="38" fill="#4a3a68" opacity=".7"/><rect x="1219" y="923" width="1" height="38" fill="#4a3a68" opacity=".7"/><rect x="1226" y="923" width="1" height="38" fill="#58384f" opacity=".7"/><rect x="1231" y="923" width="1" height="38" fill="#4a3a68" opacity=".7"/><rect x="1238" y="923" width="2" height="38" fill="#58384f"/><rect x="1244" y="923" width="1" height="38" fill="#4a3a68" opacity=".7"/><rect x="1246" y="923" width="3" height="38" fill="#58384f"/><rect x="1298" y="923" width="1" height="38" fill="#4a3a68" opacity=".7"/><rect x="1302" y="923" width="1" height="38" fill="#4a3a68" opacity=".7"/><rect x="1306" y="923" width="1" height="38" fill="#4a3a68" opacity=".7"/><rect x="1314" y="923" width="1" height="38" fill="#4a3a68" opacity=".7"/><rect x="1318" y="923" width="2" height="38" fill="#4a3a68"/><rect x="1342" y="923" width="1" height="38" fill="#4a3a68" opacity=".7"/><rect x="1346" y="923" width="1" height="38" fill="#4a3a68" opacity=".7"/><rect x="1348" y="923" width="2" height="38" fill="#4a3a68"/><rect x="1358" y="923" width="1" height="38" fill="#3a5a44" opacity=".7"/><rect x="1361" y="923" width="3" height="38" fill="#3a4a5c"/><rect x="0" y="963" width="65" height="38" fill="#502c4c"/><rect x="67" y="963" width="37" height="38" fill="#593f52"/><rect x="107" y="963" width="18" height="38" fill="#3e3660"/><rect x="128" y="963" width="1" height="38" fill="#3a5a44" opacity=".7"/><rect x="136" y="963" width="1" height="38" fill="#4a3a68" opacity=".7"/><rect x="176" y="963" width="31" height="38" fill="#593f52"/><rect x="209" y="963" width="11" height="38" fill="#3a5544"/><rect x="222" y="963" width="1" height="38" fill="#3a5a44" opacity=".7"/><rect x="225" y="963" width="1" height="38" fill="#4a3a68" opacity=".7"/><rect x="240" y="963" width="17" height="38" fill="#3a5a4c"/><rect x="275" y="963" width="3" height="38" fill="#4a3a68"/><rect x="304" y="963" width="1" height="38" fill="#3a5a44" opacity=".7"/><rect x="323" y="963" width="3" height="38" fill="#58384f"/><rect x="328" y="963" width="1" height="38" fill="#3a5a44" opacity=".7"/><rect x="330" y="963" width="1" height="38" fill="#3a5a44" opacity=".7"/><rect x="335" y="963" width="1" height="38" fill="#3a5a44" opacity=".7"/><rect x="340" y="963" width="1" height="38" fill="#3a5a44" opacity=".7"/><rect x="349" y="963" width="1" height="38" fill="#58384f" opacity=".7"/><rect x="507" y="963" width="1" height="38" fill="#4a3a68" opacity=".7"/><rect x="551" y="963" width="1" height="38" fill="#4a3a68" opacity=".7"/><rect x="569" y="963" width="1" height="38" fill="#3a5a44" opacity=".7"/><rect x="679" y="963" width="21" height="38" fill="#502c4c"/><rect x="702" y="963" width="17" height="38" fill="#593f52"/><rect x="722" y="963" width="9" height="38" fill="#3e3660"/><rect x="732" y="963" width="2" height="38" fill="#4a3a68"/><rect x="736" y="963" width="2" height="38" fill="#58384f"/><rect x="757" y="963" width="7" height="38" fill="#58384f"/><rect x="766" y="963" width="1" height="38" fill="#3a5a44" opacity=".7"/><rect x="769" y="963" width="1" height="38" fill="#3a5a44" opacity=".7"/><rect x="775" y="963" width="5" height="38" fill="#3a5544"/><rect x="806" y="963" width="1" height="38" fill="#4a3a68" opacity=".7"/><rect x="809" y="963" width="1" height="38" fill="#3a5a44" opacity=".7"/><rect x="812" y="963" width="1" height="38" fill="#58384f" opacity=".7"/><rect x="843" y="963" width="1" height="38" fill="#4a3a68" opacity=".7"/><rect x="878" y="963" width="1" height="38" fill="#3a5a44" opacity=".7"/><rect x="884" y="963" width="1" height="38" fill="#4a3a68" opacity=".7"/><rect x="1023" y="963" width="2" height="38" fill="#4a3a68"/><rect x="1027" y="963" width="1" height="38" fill="#3a5a44" opacity=".7"/><rect x="1041" y="963" width="1" height="38" fill="#4a3a68" opacity=".7"/><rect x="1065" y="963" width="8" height="38" fill="#2e3060"/><rect x="1076" y="963" width="1" height="38" fill="#4a3a68" opacity=".7"/><rect x="1087" y="963" width="4" height="38" fill="#3a5a44"/><rect x="1092" y="963" width="2" height="38" fill="#58384f"/><rect x="1095" y="963" width="1" height="38" fill="#3a5a44" opacity=".7"/><rect x="1176" y="963" width="1" height="38" fill="#3a5a44" opacity=".7"/><rect x="1182" y="963" width="1" height="38" fill="#3a5a44" opacity=".7"/><rect x="1196" y="963" width="1" height="38" fill="#4a3a68" opacity=".7"/><rect x="1214" y="963" width="1" height="38" fill="#4a3a68" opacity=".7"/><rect x="1219" y="963" width="1" height="38" fill="#4a3a68" opacity=".7"/><rect x="1226" y="963" width="1" height="38" fill="#3a5a44" opacity=".7"/><rect x="1231" y="963" width="1" height="38" fill="#3a5a44" opacity=".7"/><rect x="1238" y="963" width="1" height="38" fill="#3a5a44" opacity=".7"/><rect x="1243" y="963" width="1" height="38" fill="#3a5a44" opacity=".7"/><rect x="1246" y="963" width="2" height="38" fill="#58384f"/><rect x="1298" y="963" width="1" height="38" fill="#4a3a68" opacity=".7"/><rect x="1306" y="963" width="1" height="38" fill="#3a5a44" opacity=".7"/><rect x="1317" y="963" width="2" height="38" fill="#3a5a44"/><rect x="1358" y="963" width="1" height="38" fill="#3a5a44" opacity=".7"/><rect x="0" y="1003" width="50" height="38" fill="#593f52"/><rect x="67" y="1003" width="23" height="38" fill="#2e5040"/><rect x="176" y="1003" width="18" height="38" fill="#3a5a4c"/><rect x="196" y="1003" width="1" height="38" fill="#3a5a44" opacity=".7"/><rect x="198" y="1003" width="2" height="38" fill="#3a5a44"/><rect x="209" y="1003" width="8" height="38" fill="#593f52"/><rect x="225" y="1003" width="1" height="38" fill="#3a5a44" opacity=".7"/><rect x="240" y="1003" width="15" height="38" fill="#36523e"/><rect x="323" y="1003" width="2" height="38" fill="#3a5a44"/><rect x="327" y="1003" width="1" height="38" fill="#3a5a44" opacity=".7"/><rect x="335" y="1003" width="1" height="38" fill="#3a5a44" opacity=".7"/><rect x="349" y="1003" width="1" height="38" fill="#3a5a44" opacity=".7"/><rect x="679" y="1003" width="16" height="38" fill="#593f52"/><rect x="696" y="1003" width="1" height="38" fill="#3a5a44" opacity=".7"/><rect x="702" y="1003" width="11" height="38" fill="#2e5040"/><rect x="732" y="1003" width="1" height="38" fill="#4a3a68" opacity=".7"/><rect x="735" y="1003" width="1" height="38" fill="#4a3a68" opacity=".7"/><rect x="737" y="1003" width="1" height="38" fill="#4a3a68" opacity=".7"/><rect x="757" y="1003" width="3" height="38" fill="#3a5a44"/><rect x="763" y="1003" width="1" height="38" fill="#3a5a44" opacity=".7"/><rect x="767" y="1003" width="1" height="38" fill="#4a3a68" opacity=".7"/><rect x="775" y="1003" width="4" height="38" fill="#3a5a44"/><rect x="804" y="1003" width="2" height="38" fill="#3a5a44"/><rect x="808" y="1003" width="1" height="38" fill="#3a5a44" opacity=".7"/><rect x="812" y="1003" width="1" height="38" fill="#3a5a44" opacity=".7"/><rect x="843" y="1003" width="1" height="38" fill="#58384f" opacity=".7"/><rect x="884" y="1003" width="1" height="38" fill="#3a5a44" opacity=".7"/><rect x="1041" y="1003" width="1" height="38" fill="#4a3a68" opacity=".7"/><rect x="1065" y="1003" width="6" height="38" fill="#2a4a42"/><rect x="1073" y="1003" width="1" height="38" fill="#3a5a44" opacity=".7"/><rect x="1075" y="1003" width="1" height="38" fill="#4a3a68" opacity=".7"/><rect x="1078" y="1003" width="1" height="38" fill="#3a5a44" opacity=".7"/><rect x="1083" y="1003" width="1" height="38" fill="#4a3a68" opacity=".7"/><rect x="1087" y="1003" width="1" height="38" fill="#4a3a68" opacity=".7"/><rect x="1090" y="1003" width="1" height="38" fill="#3a5a44" opacity=".7"/><rect x="1092" y="1003" width="3" height="38" fill="#4a3a68"/><rect x="1183" y="1003" width="1" height="38" fill="#58384f" opacity=".7"/><rect x="1219" y="1003" width="1" height="38" fill="#3a5a44" opacity=".7"/><rect x="1226" y="1003" width="1" height="38" fill="#3a5a44" opacity=".7"/><rect x="1231" y="1003" width="1" height="38" fill="#3a5a44" opacity=".7"/><rect x="1238" y="1003" width="2" height="38" fill="#3a5a44"/><rect x="1243" y="1003" width="1" height="38" fill="#3a5a44" opacity=".7"/><rect x="1247" y="1003" width="1" height="38" fill="#58384f" opacity=".7"/><rect x="1319" y="1003" width="1" height="38" fill="#4a3a68" opacity=".7"/><rect x="0" y="1043" width="22" height="38" fill="#2e5040"/><rect x="24" y="1043" width="7" height="38" fill="#3a5a48"/><rect x="33" y="1043" width="5" height="38" fill="#3e5a48"/><rect x="51" y="1043" width="1" height="38" fill="#4a3a68" opacity=".7"/><rect x="67" y="1043" width="15" height="38" fill="#3c5a48"/><rect x="176" y="1043" width="16" height="38" fill="#36523e"/><rect x="193" y="1043" width="1" height="38" fill="#3a5a44" opacity=".7"/><rect x="197" y="1043" width="2" height="38" fill="#4a3a68"/><rect x="208" y="1043" width="1" height="38" fill="#4a3a68" opacity=".7"/><rect x="225" y="1043" width="1" height="38" fill="#4a3a68" opacity=".7"/><rect x="240" y="1043" width="8" height="38" fill="#3a5a44"/><rect x="249" y="1043" width="1" height="38" fill="#4a3a68" opacity=".7"/><rect x="323" y="1043" width="2" height="38" fill="#3a5a44"/><rect x="334" y="1043" width="1" height="38" fill="#4a3a68" opacity=".7"/><rect x="347" y="1043" width="1" height="38" fill="#3a5a44" opacity=".7"/><rect x="679" y="1043" width="6" height="38" fill="#3a5a48"/><rect x="687" y="1043" width="1" height="38" fill="#3a5a44" opacity=".7"/><rect x="690" y="1043" width="1" height="38" fill="#3a5a44" opacity=".7"/><rect x="696" y="1043" width="1" height="38" fill="#4a3a68" opacity=".7"/><rect x="702" y="1043" width="7" height="38" fill="#3c5a48"/><rect x="710" y="1043" width="1" height="38" fill="#4a3a68" opacity=".7"/><rect x="734" y="1043" width="1" height="38" fill="#4a3a68" opacity=".7"/><rect x="757" y="1043" width="2" height="38" fill="#3a5a44"/><rect x="761" y="1043" width="1" height="38" fill="#3a5a44" opacity=".7"/><rect x="775" y="1043" width="2" height="38" fill="#3a5a44"/><rect x="778" y="1043" width="1" height="38" fill="#4a3a68" opacity=".7"/><rect x="804" y="1043" width="1" height="38" fill="#3a5a44" opacity=".7"/><rect x="808" y="1043" width="1" height="38" fill="#3a5a44" opacity=".7"/><rect x="812" y="1043" width="1" height="38" fill="#3a5a44" opacity=".7"/><rect x="1065" y="1043" width="6" height="38" fill="#36503c"/><rect x="1075" y="1043" width="2" height="38" fill="#3a5a44"/><rect x="1079" y="1043" width="1" height="38" fill="#4a3a68" opacity=".7"/><rect x="1087" y="1043" width="1" height="38" fill="#3a5a44" opacity=".7"/><rect x="1092" y="1043" width="3" height="38" fill="#3a5a44"/><rect x="1219" y="1043" width="1" height="38" fill="#3a5a44" opacity=".7"/><rect x="1225" y="1043" width="1" height="38" fill="#3a5a44" opacity=".7"/><rect x="1227" y="1043" width="1" height="38" fill="#3a5a44" opacity=".7"/><rect x="1231" y="1043" width="1" height="38" fill="#3a5a44" opacity=".7"/><rect x="1237" y="1043" width="1" height="38" fill="#3a5a44" opacity=".7"/><rect x="1247" y="1043" width="1" height="38" fill="#3a5a44" opacity=".7"/><rect x="0" y="1083" width="13" height="38" fill="#36523e"/><rect x="14" y="1083" width="1" height="38" fill="#4a3a68" opacity=".7"/><rect x="33" y="1083" width="3" height="38" fill="#3a5a44"/><rect x="38" y="1083" width="1" height="38" fill="#4a3a68" opacity=".7"/><rect x="51" y="1083" width="1" height="38" fill="#4a3a68" opacity=".7"/><rect x="67" y="1083" width="1" height="38" fill="#4a3a68" opacity=".7"/><rect x="70" y="1083" width="2" height="38" fill="#3a5a44"/><rect x="176" y="1083" width="6" height="38" fill="#3a5a48"/><rect x="193" y="1083" width="1" height="38" fill="#3a5a44" opacity=".7"/><rect x="324" y="1083" width="1" height="38" fill="#4a3a68" opacity=".7"/><rect x="347" y="1083" width="1" height="38" fill="#3a5a44" opacity=".7"/><rect x="679" y="1083" width="3" height="38" fill="#3a5a44"/><rect x="683" y="1083" width="1" height="38" fill="#4a3a68" opacity=".7"/><rect x="686" y="1083" width="1" height="38" fill="#4a3a68" opacity=".7"/><rect x="702" y="1083" width="1" height="38" fill="#4a3a68" opacity=".7"/><rect x="704" y="1083" width="1" height="38" fill="#58384f" opacity=".7"/><rect x="756" y="1083" width="1" height="38" fill="#4a3a68" opacity=".7"/><rect x="761" y="1083" width="1" height="38" fill="#3a5a44" opacity=".7"/><rect x="774" y="1083" width="1" height="38" fill="#4a3a68" opacity=".7"/><rect x="804" y="1083" width="1" height="38" fill="#3a5a44" opacity=".7"/><rect x="1065" y="1083" width="6" height="38" fill="#3a5a4c"/><rect x="1077" y="1083" width="1" height="38" fill="#4a3a68" opacity=".7"/><rect x="1087" y="1083" width="1" height="38" fill="#3a5a44" opacity=".7"/><rect x="1092" y="1083" width="2" height="38" fill="#58384f"/><rect x="1225" y="1083" width="1" height="38" fill="#3a5a44" opacity=".7"/><rect x="1238" y="1083" width="1" height="38" fill="#3a5a44" opacity=".7"/><rect x="1247" y="1083" width="1" height="38" fill="#3a5a44" opacity=".7"/><rect x="33" y="1123" width="1" height="38" fill="#3a5a44" opacity=".7"/><rect x="52" y="1123" width="1" height="38" fill="#4a3a68" opacity=".7"/><rect x="67" y="1123" width="1" height="38" fill="#4a3a68" opacity=".7"/><rect x="176" y="1123" width="1" height="38" fill="#3a5a44" opacity=".7"/><rect x="325" y="1123" width="1" height="38" fill="#4a3a68" opacity=".7"/><rect x="347" y="1123" width="1" height="38" fill="#3a5a44" opacity=".7"/><rect x="679" y="1123" width="1" height="38" fill="#56304e" opacity=".7"/><rect x="690" y="1123" width="1" height="38" fill="#3a5a44" opacity=".7"/><rect x="702" y="1123" width="1" height="38" fill="#4a3a68" opacity=".7"/><rect x="804" y="1123" width="1" height="38" fill="#3a5a44" opacity=".7"/><rect x="1065" y="1123" width="5" height="38" fill="#503060"/><rect x="1075" y="1123" width="1" height="38" fill="#58384f" opacity=".7"/><rect x="1087" y="1123" width="1" height="38" fill="#3a5a44" opacity=".7"/><rect x="1092" y="1123" width="1" height="38" fill="#3a5a44" opacity=".7"/><rect x="1247" y="1123" width="1" height="38" fill="#3a5a44" opacity=".7"/><rect x="33" y="1163" width="1" height="38" fill="#56304e" opacity=".7"/><rect x="325" y="1163" width="1" height="38" fill="#4a3a68" opacity=".7"/><rect x="679" y="1163" width="1" height="38" fill="#4a3a68" opacity=".7"/><rect x="690" y="1163" width="1" height="38" fill="#56304e" opacity=".7"/><rect x="1064" y="1163" width="2" height="38" fill="#58384f"/><rect x="1067" y="1163" width="2" height="38" fill="#3a5a44"/><rect x="1075" y="1163" width="1" height="38" fill="#4a3a68" opacity=".7"/><rect x="1081" y="1163" width="1" height="38" fill="#4a3a68" opacity=".7"/><rect x="1092" y="1163" width="1" height="38" fill="#4a3a68" opacity=".7"/><rect x="33" y="1203" width="1" height="38" fill="#4a3a68" opacity=".7"/><rect x="690" y="1203" width="1" height="38" fill="#4a3a68" opacity=".7"/><rect x="1064" y="1203" width="5" height="38" fill="#58355a"/></g>
</svg>
<div id="sep"><b></b><i></i></div>
<div class="tl" style="left:66px;top:37px">20.00s</div><div class="tl" style="left:335px;top:37px">40.00s</div><div class="tl" style="left:603px;top:37px">1:00</div><div class="tl" style="left:871px;top:37px">1:20</div><div class="tl" style="left:1139px;top:37px">1:40</div><div class="tl" style="left:66px;top:240.5px">20.00s</div><div class="tl" style="left:335px;top:240.5px">40.00s</div><div class="tl" style="left:603px;top:240.5px">1:00</div><div class="tl" style="left:871px;top:240.5px">1:20</div><div class="tl" style="left:1139px;top:240.5px">1:40</div>
<div class="l" style="left:8px;top:283px">MAIN.MAIN</div><div class="l" style="left:8px;top:323px">Distribution.PackageDescription.FieldGrammar.packageDescriptionFieldGrammar</div><div class="l" style="left:8px;top:363px">Distribution.FieldGrammar.Class.monoidalFieldAla</div><div class="l" style="left:1428px;top:363px">D…</div><div class="l" style="left:1474px;top:363px">…</div><div class="l" style="left:8px;top:403px">Distribution.FieldGrammar.Parsec.$fFieldGrammarParsecParsecFieldGrammar_$cmonoidalFieldAla</div><div class="l" style="left:1474px;top:403px">…</div><div class="l" style="left:8px;top:443px">Distribution.FieldGrammar.Parsec.$w$cmonoidalFieldAla</div><div class="l" style="left:1474px;top:443px">…</div><div class="l" style="left:8px;top:483px">Distribution.Pac…nfoFieldGrammar4</div><div class="l" style="left:429px;top:483px">Distribut…mar.irred</div><div class="l" style="left:688px;top:483px">Distr…red13</div><div class="l" style="left:852px;top:483px">Dist…dAla</div><div class="l" style="left:984px;top:483px">Di…f2</div><div class="l" style="left:1074px;top:483px">Di…a</div><div class="l" style="left:8px;top:523px">Distribution.Fie…secList_$cparsec</div><div class="l" style="left:429px;top:523px">Distribut…_$cparsec</div><div class="l" style="left:688px;top:523px">Distr…arsec</div><div class="l" style="left:984px;top:523px">Di…ec</div><div class="l" style="left:1074px;top:523px">Di…a</div><div class="l" style="left:8px;top:563px">Distribution.F…ypes.parseSep</div><div class="l" style="left:370px;top:563px">D…5</div><div class="l" style="left:429px;top:563px">Distrib…arseSep</div><div class="l" style="left:632px;top:563px">D…</div><div class="l" style="left:688px;top:563px">Dist…eSep</div><div class="l" style="left:984px;top:563px">Di…ep</div><div class="l" style="left:1074px;top:563px">Di…a</div><div class="l" style="left:8px;top:603px">Distribution.F…at_$cparseSep</div><div class="l" style="left:370px;top:603px">D…c</div><div class="l" style="left:429px;top:603px">Distrib…arseSep</div><div class="l" style="left:632px;top:603px">D…</div><div class="l" style="left:688px;top:603px">Dist…eSep</div><div class="l" style="left:984px;top:603px">Di…ep</div><div class="l" style="left:1074px;top:603px">D…a</div><div class="l" style="left:8px;top:643px">Distribution.F…$w$cparseSep1</div><div class="l" style="left:370px;top:643px">…</div><div class="l" style="left:429px;top:643px">Distrib…rseSep4</div><div class="l" style="left:632px;top:643px">D…</div><div class="l" style="left:688px;top:643px">Dist…Sep1</div><div class="l" style="left:984px;top:643px">Di…p4</div><div class="l" style="left:1074px;top:643px">D…a</div><div class="l" style="left:8px;top:683px">Distribution.P…alSpecVersion</div><div class="l" style="left:429px;top:683px">Distrib…Version</div><div class="l" style="left:688px;top:683px">Dist…sion</div><div class="l" style="left:984px;top:683px">Di…on</div><div class="l" style="left:1074px;top:683px">D…a</div><div class="l" style="left:8px;top:723px">Distribution…secCommaList</div><div class="l" style="left:429px;top:723px">Distrib…maList</div><div class="l" style="left:688px;top:723px">Dist…ist</div><div class="l" style="left:984px;top:723px">Di…st</div><div class="l" style="left:1074px;top:723px">D…T</div><div class="l" style="left:8px;top:763px">Distri…atisfy</div><div class="l" style="left:185px;top:763px">Dist…mar5</div><div class="l" style="left:429px;top:763px">Di…ec</div><div class="l" style="left:517px;top:763px">D…r</div><div class="l" style="left:579px;top:763px">…</div><div class="l" style="left:688px;top:763px">Di…y</div><div class="l" style="left:766px;top:763px">…</div><div class="l" style="left:984px;top:763px">D…</div><div class="l" style="left:1074px;top:763px">D…s</div><div class="l" style="left:8px;top:803px">Distr…Many</div><div class="l" style="left:185px;top:803px">Dist…rsec</div><div class="l" style="left:429px;top:803px">Di…ec</div><div class="l" style="left:517px;top:803px">D…y</div><div class="l" style="left:688px;top:803px">D…y</div><div class="l" style="left:766px;top:803px">…</div><div class="l" style="left:984px;top:803px">D…</div><div class="l" style="left:1074px;top:803px">D…a</div><div class="l" style="left:8px;top:843px">Dist…mar5</div><div class="l" style="left:185px;top:843px">Dis…ec</div><div class="l" style="left:429px;top:843px">Di…me</div><div class="l" style="left:688px;top:843px">D…3</div><div class="l" style="left:984px;top:843px">…</div><div class="l" style="left:1074px;top:843px">D…a</div><div class="l" style="left:8px;top:883px">Dist…rsec</div><div class="l" style="left:185px;top:883px">D…r</div><div class="l" style="left:429px;top:883px">D…y</div><div class="l" style="left:688px;top:883px">D…c</div><div class="l" style="left:1074px;top:883px">D…a</div><div class="l" style="left:8px;top:923px">Dis…sec</div><div class="l" style="left:185px;top:923px">D…y</div><div class="l" style="left:688px;top:923px">…</div><div class="l" style="left:8px;top:963px">D…r</div><div class="l" style="left:76px;top:963px">…</div><div class="l" style="left:8px;top:1003px">D…</div>
<div class="gl" style="left:266px"></div><div class="gl" style="left:535px"></div><div class="gl" style="left:803px"></div><div class="gl" style="left:1071px"></div><div class="gl" style="left:1339px"></div>
</div></body></html>
